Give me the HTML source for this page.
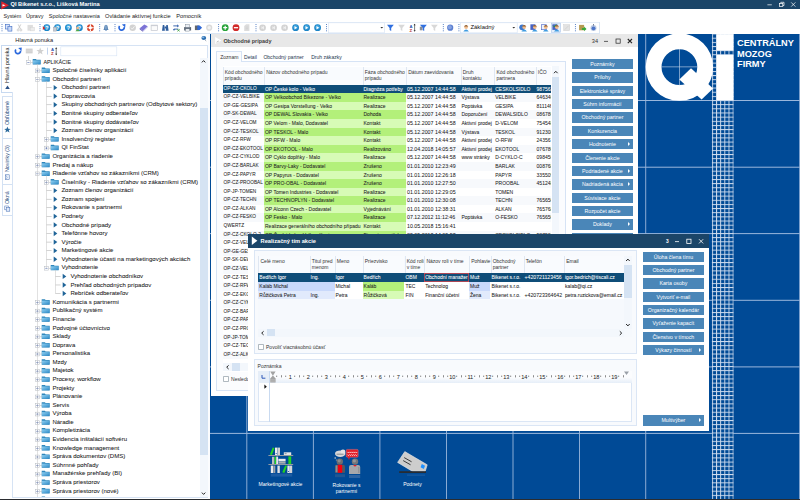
<!DOCTYPE html>
<html><head><meta charset="utf-8"><title>QI</title>
<style>
html,body{margin:0;padding:0}
body{width:800px;height:500px;overflow:hidden;position:relative;background:#fff;
 font-family:"Liberation Sans","DejaVu Sans",sans-serif;color:#222;font-size:5px}
.a{position:absolute;white-space:nowrap}
.t{position:absolute;white-space:nowrap;line-height:1;transform-origin:0 50%}
svg{position:absolute;overflow:visible}
.btn{position:absolute;background:#4a86b8;color:#fff;text-align:center;font-size:5.25px;height:10.3px;line-height:10.5px;width:60.6px;white-space:nowrap}
.btn i{position:absolute;right:2.8px;top:2.7px;width:0;height:0;border-left:2.7px solid #fff;border-top:2.2px solid transparent;border-bottom:2.2px solid transparent}
.row{-webkit-text-stroke:0.04px;position:absolute;height:8.6px;line-height:8.6px;font-size:5px;white-space:nowrap}
.c{position:absolute;top:0;height:100%;overflow:hidden;white-space:nowrap;padding-left:1px;box-sizing:border-box}
.hd{position:absolute;font-size:5px;line-height:6.1px;color:#333;white-space:normal;overflow:hidden;padding-left:1.2px;box-sizing:border-box;border-left:0.5px solid #dfe7f2}
.tr{-webkit-text-stroke:0.05px #1a1a1a;position:absolute;left:0;height:8.58px;line-height:8.6px;font-size:6.05px;white-space:nowrap;color:#1a1a1a}
</style></head><body>
<div class="a" style="left:210px;top:34.1px;width:590px;height:465.9px;background:#004a96"></div><svg width="800" height="500" style="left:0;top:0" viewBox="0 0 800 500"><defs><pattern id="gr" x="711.9" y="33.55" width="4.156" height="4.156" patternUnits="userSpaceOnUse"><rect width="4.156" height="4.156" fill="#cfdcee"/><rect x="0.95" y="0.95" width="3.2" height="3.2" fill="#004a96"/></pattern></defs><rect x="246.3" y="34.1" width="1" height="465.9" fill="#8aabd4"/><rect x="312.9" y="34.1" width="1" height="465.9" fill="#8aabd4"/><rect x="379.4" y="34.1" width="1" height="465.9" fill="#8aabd4"/><rect x="446.0" y="34.1" width="1" height="465.9" fill="#8aabd4"/><rect x="512.5" y="34.1" width="1" height="465.9" fill="#8aabd4"/><rect x="579.0" y="34.1" width="1" height="465.9" fill="#8aabd4"/><rect x="645.2" y="34.1" width="1" height="465.9" fill="#8aabd4"/><rect x="799.1" y="34.1" width="1" height="465.9" fill="#8aabd4"/><rect x="210" y="100.0" width="590" height="1" fill="#9ab7dc"/><rect x="210" y="166.7" width="590" height="1" fill="#9ab7dc"/><rect x="210" y="233.1" width="590" height="1" fill="#9ab7dc"/><rect x="210" y="299.8" width="590" height="1" fill="#9ab7dc"/><rect x="210" y="366.4" width="590" height="1" fill="#9ab7dc"/><rect x="210" y="432.9" width="590" height="1" fill="#9ab7dc"/><rect x="711.9" y="34.1" width="21.75" height="465.9" fill="url(#gr)"/><rect x="716.7" y="34.1" width="16.8" height="16.3" fill="#fff"/><rect x="716.7" y="54.9" width="16.8" height="45.2" fill="#fff"/><circle cx="679.4" cy="67.1" r="25.78" fill="none" stroke="#fff" stroke-width="15.85"/><rect x="679.2" y="49" width="0.6" height="36.4" fill="#c9d7ec"/><rect x="661.4" y="66.6" width="36" height="0.6" fill="#c9d7ec"/><polygon points="691,68.3 713.1,88.6 701.6,99.6 679.3,79.5" fill="#fff"/></svg><div class="a" style="left:737.4px;top:38.3px;font-size:9.7px;line-height:10.3px;font-weight:bold;color:#fff;transform:scaleX(0.953);transform-origin:0 0">CENTRÁLNY<br>MOZOG<br>FIRMY</div><div class="a" style="left:0;top:0;width:800px;height:9.2px;background:#1b4568"></div><svg width="9" height="9" style="left:1px;top:0.5px" viewBox="0 0 9 9"><polygon points="0.3,0.3 8,4.3 0.3,8.5" fill="#e0202a"/><polygon points="1.5,3.2 4.5,4.3 1.5,5.6" fill="#fff"/></svg><div class="a" style="left:10.5px;top:1.2px;font-size:5.7px;line-height:6.5px;font-weight:bold;color:#fff">QI Bikenet s.r.o., Lišková Martina</div><svg width="40" height="10" style="left:760px;top:0" viewBox="760 0 40 10"><g stroke="#fff" stroke-width="0.7" fill="none"><path d="M767.4 4.8h4.4"/><rect x="779.6" y="3.4" width="3.2" height="3.2"/><path d="M780.8 3.4v-1.1h3.2v3.2h-1.2"/><path d="M791.2 2.4l4.2 4.2M795.4 2.4l-4.2 4.2"/></g></svg><div class="a" style="left:3.4px;top:12.6px;font-size:5.35px;line-height:7px;color:#1a1a1a">Systém</div><div class="a" style="left:26px;top:12.6px;font-size:5.5px;line-height:7px;color:#1a1a1a">Úpravy</div><div class="a" style="left:48.8px;top:12.6px;font-size:5.5px;line-height:7px;color:#1a1a1a">Spoločné nastavenia</div><div class="a" style="left:105.1px;top:12.6px;font-size:5.62px;line-height:7px;color:#1a1a1a">Ovládanie aktívnej funkcie</div><div class="a" style="left:176.2px;top:12.6px;font-size:5.68px;line-height:7px;color:#1a1a1a">Pomocník</div><div class="a" style="left:0;top:33.1px;width:600px;height:0.8px;background:#dbe6f4"></div><div class="a" style="left:0;top:21.6px;width:600px;height:0.6px;background:#e6eef8"></div><div class="a" style="left:599.4px;top:21.6px;width:0.6px;height:12px;background:#dbe6f4"></div><svg width="800" height="40" style="left:0;top:0" viewBox="0 0 800 40"><rect x="328.6" y="22.8" width="56" height="10" fill="#fff" stroke="#d4e2f4" stroke-width="0.6"/><polygon points="380.4,27 383.2,27 381.8,28.6" fill="#333"/><rect x="460.6" y="22.8" width="56.6" height="10" fill="#fff" stroke="#d4e2f4" stroke-width="0.6"/><polygon points="512.4,27 515.2,27 513.8,28.6" fill="#333"/><rect x="1.55" y="24.0" width="0.9" height="1" fill="#4a78c0"/><rect x="1.55" y="26.1" width="0.9" height="1" fill="#4a78c0"/><rect x="1.55" y="28.2" width="0.9" height="1" fill="#4a78c0"/><rect x="1.55" y="30.3" width="0.9" height="1" fill="#4a78c0"/><rect x="5.3" y="24.4" width="4" height="4.6" fill="#dbe6fb" stroke="#3d6bc4" stroke-width="0.6"/><rect x="7.9" y="26.5" width="4" height="4.6" fill="#c9d9f7" stroke="#3d6bc4" stroke-width="0.6"/><path d="M18.2 24.4L20.5 28.9M20.8 24.4L18.5 28.9" stroke="#bbb" stroke-width="0.7" fill="none"/><circle cx="18.1" cy="30.0" r="1" fill="none" stroke="#bbb" stroke-width="0.6"/><circle cx="20.9" cy="30.0" r="1" fill="none" stroke="#bbb" stroke-width="0.6"/><rect x="27.5" y="24.9" width="5.4" height="5.8" fill="#dedede"/><rect x="30.2" y="27.3" width="4.3" height="3.6" fill="#ececec" stroke="#cfcfcf" stroke-width="0.4"/><rect x="39.55" y="24.0" width="0.9" height="1" fill="#4a78c0"/><rect x="39.55" y="26.1" width="0.9" height="1" fill="#4a78c0"/><rect x="39.55" y="28.2" width="0.9" height="1" fill="#4a78c0"/><rect x="39.55" y="30.3" width="0.9" height="1" fill="#4a78c0"/><circle cx="46.8" cy="27.7" r="3.4" fill="#1b86c9"/><circle cx="46.8" cy="27.099999999999998" r="2.3" fill="#46a8e0"/><text x="46.8" y="29.599999999999998" font-size="5.2" font-weight="bold" fill="#fff" text-anchor="middle" font-family="Liberation Sans,sans-serif">?</text><polygon points="42.8,25.9 45.199999999999996,28.3 42.8,30.099999999999998" fill="#d42a2a"/><circle cx="57.5" cy="27.7" r="3.4" fill="#1b86c9"/><circle cx="57.5" cy="27.099999999999998" r="2.3" fill="#46a8e0"/><text x="57.5" y="29.599999999999998" font-size="5.2" font-weight="bold" fill="#fff" text-anchor="middle" font-family="Liberation Sans,sans-serif">?</text><rect x="53.5" y="27.099999999999998" width="3.2" height="4" fill="#c7ccd4" stroke="#8a929e" stroke-width="0.4"/><circle cx="68.4" cy="27.7" r="3.4" fill="#1b86c9"/><circle cx="68.4" cy="27.099999999999998" r="2.3" fill="#46a8e0"/><text x="68.4" y="29.599999999999998" font-size="5.2" font-weight="bold" fill="#fff" text-anchor="middle" font-family="Liberation Sans,sans-serif">?</text><circle cx="79.4" cy="27.7" r="3.4" fill="#1b86c9"/><circle cx="79.4" cy="27.099999999999998" r="2.3" fill="#46a8e0"/><text x="79.4" y="29.599999999999998" font-size="5.2" font-weight="bold" fill="#fff" text-anchor="middle" font-family="Liberation Sans,sans-serif">?</text><circle cx="77.60000000000001" cy="27.9" r="1.5" fill="#f0b98a"/><path d="M75.4 31.3q2.2-3.4 4.4 0z" fill="#4fa84a"/><circle cx="90.4" cy="27.7" r="2.6" fill="none" stroke="#d8462c" stroke-width="1.9"/><g stroke="#fff" stroke-width="1.1"><path d="M87.0 27.7h1.8M92.0 27.7h1.8M90.4 24.3v1.8M90.4 29.3v1.8"/></g><rect x="99.25" y="24.0" width="0.9" height="1" fill="#4a78c0"/><rect x="99.25" y="26.1" width="0.9" height="1" fill="#4a78c0"/><rect x="99.25" y="28.2" width="0.9" height="1" fill="#4a78c0"/><rect x="99.25" y="30.3" width="0.9" height="1" fill="#4a78c0"/><path d="M103.4 29.9q0.8-0.8 0.8-2.6q0-2.6 1.8-2.6q1.8 0 1.8 2.6q0 1.8 0.8 2.6z" fill="#5b86b6"/><rect x="105.4" y="30.099999999999998" width="1.2" height="0.9" fill="#5b86b6"/><rect x="105.5" y="25.3" width="0.9" height="3.8" fill="#9dbbd9"/><rect x="114.55" y="24.0" width="0.9" height="1" fill="#4a78c0"/><rect x="114.55" y="26.1" width="0.9" height="1" fill="#4a78c0"/><rect x="114.55" y="28.2" width="0.9" height="1" fill="#4a78c0"/><rect x="114.55" y="30.3" width="0.9" height="1" fill="#4a78c0"/><path d="M119.60000000000001 26.0A2.6 2.6 0 1 0 124.2 27.099999999999998" fill="none" stroke="#2a68dc" stroke-width="1.7"/><polygon points="121.9,24.4 125.4,24.0 125.2,27.5" fill="#2a68dc"/><circle cx="132.7" cy="27.7" r="3.2" fill="#d2d2d2"/><path d="M131.1 27.7l1.2 1.4l2.2-2.8" stroke="#f4f4f4" stroke-width="0.9" fill="none"/><polygon points="139.7,28.3 144.29999999999998,24.5 147.7,26.3 142.89999999999998,30.7" fill="#7b73d6"/><polygon points="139.7,28.3 142.89999999999998,30.7 142.89999999999998,31.7 139.7,29.3" fill="#5b54b4"/><polygon points="142.89999999999998,30.7 147.7,26.3 147.7,27.3 142.89999999999998,31.7" fill="#aaa5e6"/><rect x="151.10000000000002" y="25.099999999999998" width="6.4" height="5.2" fill="#fbfbfb" stroke="#b9bdc6" stroke-width="0.6"/><rect x="151.10000000000002" y="25.099999999999998" width="6.4" height="1" fill="#c9ccd3"/><path d="M162.0 30.7l0.8-5.8h1.5l0.6 5.8zM168.60000000000002 30.7l-0.8-5.8h-1.5l-0.6 5.8z" fill="#2f5e9e"/><rect x="164.60000000000002" y="26.5" width="1.4" height="2" fill="#2f5e9e"/><path d="M173.3 25.9h4.4M173.9 29.099999999999998h4.4" stroke="#3d68b0" stroke-width="1"/><polygon points="177.10000000000002,24.3 179.10000000000002,25.9 177.10000000000002,27.5" fill="#3d68b0"/><polygon points="175.10000000000002,29.099999999999998 172.9,29.099999999999998 174.0,31.099999999999998" fill="#3d68b0"/><path d="M177.3 29.3l2.4 2M179.70000000000002 29.3l-2.4 2" stroke="#3a9a3a" stroke-width="0.8"/><rect x="184.1" y="27.099999999999998" width="7" height="3.4" fill="#5a6574"/><rect x="185.6" y="24.5" width="4" height="2.8" fill="#e9edf3" stroke="#6c7888" stroke-width="0.4"/><rect x="185.6" y="28.9" width="4" height="2.2" fill="#f5f7fa" stroke="#6c7888" stroke-width="0.4"/><rect x="194.9" y="25.5" width="4" height="4.6" fill="#60666e"/><path d="M197.3 25.5h2.4l2.4 2.3l-2.4 2.3h-2.4z" fill="#2f68d4"/><circle cx="209.2" cy="27.7" r="3.1" fill="#dadada"/><circle cx="209.2" cy="27.7" r="1.7" fill="#f2f2f2"/><rect x="218.15" y="24.0" width="0.9" height="1" fill="#4a78c0"/><rect x="218.15" y="26.1" width="0.9" height="1" fill="#4a78c0"/><rect x="218.15" y="28.2" width="0.9" height="1" fill="#4a78c0"/><rect x="218.15" y="30.3" width="0.9" height="1" fill="#4a78c0"/><circle cx="225.2" cy="27.7" r="3.4" fill="#27a33a"/><path d="M223.2 27.7h4M225.2 25.7v4" stroke="#fff" stroke-width="1.2"/><circle cx="236" cy="27.7" r="3.4" fill="#d12a2a"/><path d="M233.9 27.7h4.2" stroke="#fff" stroke-width="1.3"/><path d="M244.20000000000002 30.9v-4.8l2-1.8h3.2v6.6z" fill="#dcdcdc"/><path d="M245.8 27.099999999999998h2.4M245.8 28.7h2.4" stroke="#c6c6c6" stroke-width="0.5"/><rect x="255.55" y="24.0" width="0.9" height="1" fill="#4a78c0"/><rect x="255.55" y="26.1" width="0.9" height="1" fill="#4a78c0"/><rect x="255.55" y="28.2" width="0.9" height="1" fill="#4a78c0"/><rect x="255.55" y="30.3" width="0.9" height="1" fill="#4a78c0"/><circle cx="262.6" cy="27.7" r="3.3" fill="#d3d3d3"/><path d="M261.8 26.4v2.6M263.5 26.4l-1.3 1.3l1.3 1.3z" stroke="#f3f3f3" stroke-width="0.7" fill="#f3f3f3"/><circle cx="273.6" cy="27.7" r="3.3" fill="#d3d3d3"/><path d="M272.8 26.4v2.6M274.5 26.4l-1.3 1.3l1.3 1.3z" stroke="#f3f3f3" stroke-width="0.7" fill="#f3f3f3"/><circle cx="284.6" cy="27.7" r="3.3" fill="#d3d3d3"/><path d="M283.8 26.4v2.6M285.5 26.4l-1.3 1.3l1.3 1.3z" stroke="#f3f3f3" stroke-width="0.7" fill="#f3f3f3"/><circle cx="295.6" cy="27.7" r="3.4" fill="#1c84c6"/><circle cx="295.6" cy="27.2" r="2.4" fill="#3aa0dc"/><polygon points="294.5,26.0 297.20000000000005,27.7 294.5,29.4" fill="#fff"/><circle cx="306.6" cy="27.7" r="3.4" fill="#1c84c6"/><circle cx="306.6" cy="27.2" r="2.4" fill="#3aa0dc"/><polygon points="305.5,26.0 308.20000000000005,27.7 305.5,29.4" fill="#fff"/><circle cx="317.6" cy="27.7" r="3.4" fill="#1c84c6"/><circle cx="317.6" cy="27.2" r="2.4" fill="#3aa0dc"/><polygon points="316.5,26.0 319.20000000000005,27.7 316.5,29.4" fill="#fff"/><rect x="326.05" y="24.0" width="0.9" height="1" fill="#4a78c0"/><rect x="326.05" y="26.1" width="0.9" height="1" fill="#4a78c0"/><rect x="326.05" y="28.2" width="0.9" height="1" fill="#4a78c0"/><rect x="326.05" y="30.3" width="0.9" height="1" fill="#4a78c0"/><polygon points="387.0,24.7 393.79999999999995,24.7 391.2,27.9 391.2,30.9 389.59999999999997,29.9 389.59999999999997,27.9" fill="#2f6fe0"/><polygon points="398.1,24.7 404.9,24.7 402.3,27.9 402.3,30.9 400.7,29.9 400.7,27.9" fill="#d8d8d8"/><text x="409.40000000000003" y="27.5" font-size="4.2" font-weight="bold" fill="#2b4fa8" font-family="Liberation Sans,sans-serif">A</text><text x="409.40000000000003" y="31.5" font-size="4.2" font-weight="bold" fill="#b83030" font-family="Liberation Sans,sans-serif">Z</text><path d="M414.6 24.7v6.2" stroke="#222" stroke-width="0.6"/><polygon points="413.6,25.3 414.6,23.8 415.6,25.3" fill="#222"/><polygon points="413.6,30.3 414.6,31.799999999999997 415.6,30.3" fill="#222"/><polygon points="420.0,24.7 426.79999999999995,24.7 424.2,27.9 424.2,30.9 422.59999999999997,29.9 422.59999999999997,27.9" fill="#2f6fe0"/><rect x="419.79999999999995" y="26.7" width="2.6" height="3.6" fill="#8b9099"/><polygon points="431.0,24.7 437.79999999999995,24.7 435.2,27.9 435.2,30.9 433.59999999999997,29.9 433.59999999999997,27.9" fill="#d8d8d8"/><rect x="442.85" y="24.0" width="0.9" height="1" fill="#4a78c0"/><rect x="442.85" y="26.1" width="0.9" height="1" fill="#4a78c0"/><rect x="442.85" y="28.2" width="0.9" height="1" fill="#4a78c0"/><rect x="442.85" y="30.3" width="0.9" height="1" fill="#4a78c0"/><circle cx="450.2" cy="27.7" r="3.1" fill="#5b7fd0"/><circle cx="449.8" cy="27.2" r="2" fill="#86a3e2"/><rect x="458.45" y="24.0" width="0.9" height="1" fill="#4a78c0"/><rect x="458.45" y="26.1" width="0.9" height="1" fill="#4a78c0"/><rect x="458.45" y="28.2" width="0.9" height="1" fill="#4a78c0"/><rect x="458.45" y="30.3" width="0.9" height="1" fill="#4a78c0"/><circle cx="466.1" cy="27.099999999999998" r="1.9" fill="#f1bd8e"/><path d="M463.90000000000003 26.599999999999998q2.2-3 4.4 0z" fill="#8a5a2e"/><path d="M463.3 31.5q2.8-4 5.6 0z" fill="#3f9be0"/><circle cx="522.1999999999999" cy="27.3" r="2.9" fill="#3f78cc"/><circle cx="524.1999999999999" cy="27.099999999999998" r="1.9" fill="#f1bd8e"/><path d="M522.0 26.599999999999998q2.2-3 4.4 0z" fill="#8a5a2e"/><path d="M521.4 31.5q2.8-4 5.6 0z" fill="#3f9be0"/><rect x="530.4" y="24.3" width="5" height="5.6" fill="#4763c4"/><circle cx="534.8" cy="27.099999999999998" r="1.9" fill="#f1bd8e"/><path d="M532.6 26.599999999999998q2.2-3 4.4 0z" fill="#8a5a2e"/><path d="M532 31.5q2.8-4 5.6 0z" fill="#3f9be0"/><rect x="541.4" y="24.7" width="5" height="5" fill="#eef2fb" stroke="#4763c4" stroke-width="0.6"/><circle cx="545.8" cy="27.099999999999998" r="1.9" fill="#f1bd8e"/><path d="M543.6 26.599999999999998q2.2-3 4.4 0z" fill="#8a5a2e"/><path d="M543 31.5q2.8-4 5.6 0z" fill="#3f9be0"/><rect x="551.4" y="23.1" width="9.2" height="9.2" fill="#e4eefb" stroke="#9dbbe6" stroke-width="0.5"/><rect x="552.4" y="24.3" width="5" height="5.6" fill="#4763c4"/><circle cx="556.8" cy="27.099999999999998" r="1.9" fill="#f1bd8e"/><path d="M554.6 26.599999999999998q2.2-3 4.4 0z" fill="#8a5a2e"/><path d="M554 31.5q2.8-4 5.6 0z" fill="#3f9be0"/><path d="M553 25.7l1.2 1.2l2-2.4" stroke="#2fa12f" stroke-width="0.8" fill="none"/><rect x="563.7" y="24.7" width="6" height="6" fill="#e3e3e3" stroke="#cfcfcf" stroke-width="0.5"/><path d="M564.7 29.7l4-4" stroke="#c9c9c9" stroke-width="0.6"/><rect x="574.9499999999999" y="24.0" width="0.9" height="1" fill="#4a78c0"/><rect x="574.9499999999999" y="26.1" width="0.9" height="1" fill="#4a78c0"/><rect x="574.9499999999999" y="28.2" width="0.9" height="1" fill="#4a78c0"/><rect x="574.9499999999999" y="30.3" width="0.9" height="1" fill="#4a78c0"/><rect x="579.1" y="24.9" width="5" height="5.4" fill="#b59b52"/><polygon points="581.9,27.9 584.1,27.9 584.1,26.5 586.5,28.9 584.1,31.3 584.1,29.9 581.9,29.9" fill="#3aa83a"/><circle cx="593.5" cy="28.099999999999998" r="3" fill="#b9c7e2"/><circle cx="593.5" cy="28.3" r="1.9" fill="#4d76c9"/><rect x="593.0" y="24.099999999999998" width="1" height="1.4" fill="#68748a"/></svg><div class="a" style="left:470.5px;top:24.2px;font-size:5.9px;line-height:7px;color:#111">Základný</div><div class="a" style="left:0;top:34.2px;width:210.1px;height:465.8px;background:#fff"></div><div class="a" style="left:207.9px;top:34.2px;width:2.2px;height:465.8px;background:#fbfcfe"></div><div class="a" style="left:15.3px;top:36.6px;font-size:5.66px;line-height:7px;color:#222">Hlavná ponuka</div><svg width="8" height="8" style="left:200px;top:35px" viewBox="0 0 8 8"><ellipse cx="3.8" cy="3" rx="2.4" ry="2" fill="#2a6db0"/><ellipse cx="3.2" cy="2.4" rx="1.2" ry="0.8" fill="#7fb4e4"/><path d="M4.6 4.4l1.6 1.8" stroke="#8a96a6" stroke-width="0.7"/></svg><div class="a" style="left:0.6px;top:45px;width:12px;height:47.5px;border:0.6px solid #c7d9f0;border-right:none;box-sizing:border-box;background:#fff"></div><div class="a" style="left:12.4px;top:44.8px;width:195.4px;height:453px;border:0.6px solid #d6e3f4;box-sizing:border-box;background:#fff"></div><div class="a" style="left:12.2px;top:45.6px;width:1px;height:46.4px;background:#fff"></div><div class="a" style="left:1.6px;top:96px;width:10.8px;height:120px;border:0.5px solid #d3e1f3;border-right:none;box-sizing:border-box"></div><div class="a" style="left:1.6px;top:138.4px;width:10.8px;height:0.5px;background:#d3e1f3"></div><div class="a" style="left:1.6px;top:184.4px;width:10.8px;height:0.5px;background:#d3e1f3"></div><div class="a" style="left:7.4px;top:82.6px;width:0;height:0"><div style="position:absolute;left:0;top:0;transform:rotate(-90deg);transform-origin:0 0;white-space:nowrap;font-size:5.3px;line-height:6px;margin-top:0;color:#222"><span style="position:relative;top:-3px">Hlavná ponuka</span></div></div><div class="a" style="left:7.4px;top:125.4px;width:0;height:0"><div style="position:absolute;left:0;top:0;transform:rotate(-90deg);transform-origin:0 0;white-space:nowrap;font-size:5.45px;line-height:6px;margin-top:0;color:#2a4d80"><span style="position:relative;top:-3px">Obľúbené</span></div></div><div class="a" style="left:7.4px;top:171.7px;width:0;height:0"><div style="position:absolute;left:0;top:0;transform:rotate(-90deg);transform-origin:0 0;white-space:nowrap;font-size:5.3px;line-height:6px;margin-top:0;color:#2a4d80"><span style="position:relative;top:-3px">Novinky (3)</span></div></div><div class="a" style="left:7.4px;top:203.5px;width:0;height:0"><div style="position:absolute;left:0;top:0;transform:rotate(-90deg);transform-origin:0 0;white-space:nowrap;font-size:5.3px;line-height:6px;margin-top:0;color:#2a4d80"><span style="position:relative;top:-3px">Okná</span></div></div><svg width="13" height="240" style="left:0;top:0" viewBox="0 0 13 240"><polygon points="5.2,89 9.8,89 7.5,85.6" fill="#2a4f86"/><polygon points="7.4,126.6 8.3,128.8 10.6,128.9 8.8,130.3 9.5,132.6 7.4,131.3 5.3,132.6 6,130.3 4.2,128.9 6.5,128.8" fill="#2b6a9c"/><rect x="5.4" y="174.8" width="3.8" height="4.6" fill="#eef3fb" stroke="#3d68b0" stroke-width="0.5"/><path d="M5.4 175l1.9 2.3l-1.9 2.3" stroke="#3d68b0" stroke-width="0.4" fill="none"/><rect x="4.8" y="206" width="3.6" height="3.8" fill="#fff" stroke="#3d68b0" stroke-width="0.5"/><rect x="6.2" y="207.4" width="3.6" height="3.8" fill="#dfe9fb" stroke="#3d68b0" stroke-width="0.5"/></svg><svg width="120" height="14" style="left:0;top:44px" viewBox="0 44 120 14"><path d="M15.9 49.5A2.6 2.6 0 1 0 20.5 50.6" fill="none" stroke="#2a68dc" stroke-width="1.7"/><polygon points="18.2,47.900000000000006 21.7,47.5 21.5,51.0" fill="#2a68dc"/><rect x="25.8" y="48.6" width="6.8" height="4.8" fill="#cfcfcf"/><path d="M25.8 50.2h6.8M25.8 51.8h6.8" stroke="#e9e9e9" stroke-width="0.4"/><polygon points="40.2,47.4 41.2,50 44,50.1 41.8,51.8 42.6,54.5 40.2,52.9 37.8,54.5 38.6,51.8 36.4,50.1 39.2,50" fill="#d0d0d0"/><rect x="47.2" y="47.6" width="0.7" height="7" fill="#a9c2e6"/><text x="51.0" y="51.0" font-size="4.2" font-weight="bold" fill="#2b4fa8" font-family="Liberation Sans,sans-serif">A</text><text x="51.0" y="55.0" font-size="4.2" font-weight="bold" fill="#b83030" font-family="Liberation Sans,sans-serif">Z</text><path d="M56.2 48.2v6.2" stroke="#222" stroke-width="0.6"/><polygon points="55.2,48.800000000000004 56.2,47.300000000000004 57.2,48.800000000000004" fill="#222"/><polygon points="55.2,53.800000000000004 56.2,55.300000000000004 57.2,53.800000000000004" fill="#222"/><rect x="60.8" y="46.8" width="56" height="9" fill="#fff" stroke="#d6e3f5" stroke-width="0.6"/></svg><div class="a" style="left:13px;top:45.4px;width:187px;height:452px;overflow:hidden"><div style="position:absolute;left:-13px;top:-45.4px;width:210px;height:520px"><div class="tr" style="left:43.4px;top:57.55px;font-size:5.35px">APLIKÁCIE</div><div class="tr" style="left:52.4px;top:66.13px">Spoločné číselníky aplikácií</div><div class="tr" style="left:52.4px;top:74.71px">Obchodní partneri</div><div class="tr" style="left:61.4px;top:83.29px">Obchodní partneri</div><div class="tr" style="left:61.4px;top:91.87px">Dopravcovia</div><div class="tr" style="left:61.4px;top:100.45px">Skupiny obchodných partnerov (Odbytové sektory)</div><div class="tr" style="left:61.4px;top:109.03px">Bonitné skupiny odberateľov</div><div class="tr" style="left:61.4px;top:117.61px">Bonitné skupiny dodávateľov</div><div class="tr" style="left:61.4px;top:126.19px">Zoznam členov organizácií</div><div class="tr" style="left:61.4px;top:134.77px">Insolvenčný register</div><div class="tr" style="left:61.4px;top:143.35px">QI FinStat</div><div class="tr" style="left:52.4px;top:151.93px">Organizácia a riadenie</div><div class="tr" style="left:52.4px;top:160.51px">Predaj a nákup</div><div class="tr" style="left:52.4px;top:169.09px">Riadenie vzťahov so zákazníkmi (CRM)</div><div class="tr" style="left:61.4px;top:177.67px">Číselníky - Riadenie vzťahov so zákazníkmi (CRM)</div><div class="tr" style="left:61.4px;top:186.25px">Zoznam členov organizácií</div><div class="tr" style="left:61.4px;top:194.83px">Zoznam spojení</div><div class="tr" style="left:61.4px;top:203.41px">Rokovanie s partnermi</div><div class="tr" style="left:61.4px;top:211.99px">Podnety</div><div class="tr" style="left:61.4px;top:220.57px">Obchodné prípady</div><div class="tr" style="left:61.4px;top:229.15px">Telefónne hovory</div><div class="tr" style="left:61.4px;top:237.73px">Výročie</div><div class="tr" style="left:61.4px;top:246.31px">Marketingové akcie</div><div class="tr" style="left:61.4px;top:254.89px">Vyhodnotenie účasti na marketingových akciách</div><div class="tr" style="left:61.4px;top:263.47px">Vyhodnotenie</div><div class="tr" style="left:70.4px;top:272.05px">Vyhodnotenie obchodníkov</div><div class="tr" style="left:70.4px;top:280.63px">Prehľad obchodných prípadov</div><div class="tr" style="left:70.4px;top:289.21px">Rebríček odberateľov</div><div class="tr" style="left:52.4px;top:297.79px">Komunikácia s partnermi</div><div class="tr" style="left:52.4px;top:306.37px">Publikačný systém</div><div class="tr" style="left:52.4px;top:314.95px">Financie</div><div class="tr" style="left:52.4px;top:323.53px">Podvojné účtovníctvo</div><div class="tr" style="left:52.4px;top:332.11px">Sklady</div><div class="tr" style="left:52.4px;top:340.69px">Doprava</div><div class="tr" style="left:52.4px;top:349.27px">Personalistika</div><div class="tr" style="left:52.4px;top:357.85px">Mzdy</div><div class="tr" style="left:52.4px;top:366.43px">Majetok</div><div class="tr" style="left:52.4px;top:375.01px">Procesy, workflow</div><div class="tr" style="left:52.4px;top:383.59px">Projekty</div><div class="tr" style="left:52.4px;top:392.17px">Plánovanie</div><div class="tr" style="left:52.4px;top:400.75px">Servis</div><div class="tr" style="left:52.4px;top:409.33px">Výroba</div><div class="tr" style="left:52.4px;top:417.91px">Náradie</div><div class="tr" style="left:52.4px;top:426.49px">Kompletizácia</div><div class="tr" style="left:52.4px;top:435.07px">Evidencia inštalácií softvéru</div><div class="tr" style="left:52.4px;top:443.65px">Knowledge management</div><div class="tr" style="left:52.4px;top:452.23px">Správa dokumentov (DMS)</div><div class="tr" style="left:52.4px;top:460.81px">Súhrnné pohľady</div><div class="tr" style="left:52.4px;top:469.39px">Manažérske prehľady (BI)</div><div class="tr" style="left:52.4px;top:477.97px">Správa priestorov</div><div class="tr" style="left:52.4px;top:486.55px">Správa priestorov (nové)</div><div class="tr" style="left:52.4px;top:495.13px">Nezaradené</div><svg width="210" height="520" style="left:0;top:0" viewBox="0 0 210 520"><defs><linearGradient id="fg" x1="0" y1="0" x2="1" y2="1"><stop offset="0" stop-color="#8fd0f2"/><stop offset="1" stop-color="#2f8ac6"/></linearGradient></defs><rect x="30.4" y="62.05" width="2.4" height="0.5" fill="#b5b5b5"/><rect x="26.5" y="60.4" width="3.8" height="3.8" fill="#fff" stroke="#b3b9c1" stroke-width="0.5"/><rect x="27.299999999999997" y="62.0" width="2.2" height="0.6" fill="#4c66a8"/><path d="M32.7 59.0h3.2l0.7 0.8h4.1v4.6h-8z" fill="#2f86bb"/><rect x="33.0" y="60.4" width="7.4" height="3.7" fill="url(#fg)"/><rect x="39.4" y="70.63000000000001" width="2.4" height="0.5" fill="#b5b5b5"/><rect x="35.5" y="68.98" width="3.8" height="3.8" fill="#fff" stroke="#b3b9c1" stroke-width="0.5"/><rect x="36.3" y="70.58000000000001" width="2.2" height="0.6" fill="#4c66a8"/><rect x="37.1" y="69.78000000000002" width="0.6" height="2.2" fill="#4c66a8"/><path d="M41.7 67.58h3.2l0.7 0.8h4.1v4.6h-8z" fill="#2f86bb"/><rect x="42.0" y="68.98" width="7.4" height="3.7" fill="url(#fg)"/><rect x="39.4" y="79.21000000000001" width="2.4" height="0.5" fill="#b5b5b5"/><rect x="35.5" y="77.56" width="3.8" height="3.8" fill="#fff" stroke="#b3b9c1" stroke-width="0.5"/><rect x="36.3" y="79.16000000000001" width="2.2" height="0.6" fill="#4c66a8"/><path d="M41.7 76.16h3.2l0.7 0.8h4.1v4.6h-8z" fill="#2f86bb"/><rect x="42.0" y="77.56" width="7.4" height="3.7" fill="url(#fg)"/><polygon points="53.699999999999996,84.94 57.3,87.64 53.699999999999996,90.34" fill="#1f6498"/><rect x="46.4" y="87.39" width="5.2" height="0.5" fill="#a8a8a8"/><polygon points="53.699999999999996,93.52 57.3,96.22 53.699999999999996,98.92" fill="#1f6498"/><rect x="46.4" y="95.97" width="5.2" height="0.5" fill="#a8a8a8"/><polygon points="53.699999999999996,102.1 57.3,104.8 53.699999999999996,107.5" fill="#1f6498"/><rect x="46.4" y="104.55" width="5.2" height="0.5" fill="#a8a8a8"/><polygon points="53.699999999999996,110.67999999999999 57.3,113.38 53.699999999999996,116.08" fill="#1f6498"/><rect x="46.4" y="113.13" width="5.2" height="0.5" fill="#a8a8a8"/><polygon points="53.699999999999996,119.26 57.3,121.96000000000001 53.699999999999996,124.66000000000001" fill="#1f6498"/><rect x="46.4" y="121.71000000000001" width="5.2" height="0.5" fill="#a8a8a8"/><polygon points="53.699999999999996,127.83999999999999 57.3,130.54 53.699999999999996,133.23999999999998" fill="#1f6498"/><rect x="46.4" y="130.29" width="5.2" height="0.5" fill="#a8a8a8"/><rect x="48.4" y="139.27" width="2.4" height="0.5" fill="#b5b5b5"/><rect x="44.5" y="137.62" width="3.8" height="3.8" fill="#fff" stroke="#b3b9c1" stroke-width="0.5"/><rect x="45.3" y="139.22" width="2.2" height="0.6" fill="#4c66a8"/><rect x="46.1" y="138.42000000000002" width="0.6" height="2.2" fill="#4c66a8"/><path d="M50.7 136.22h3.2l0.7 0.8h4.1v4.6h-8z" fill="#2f86bb"/><rect x="51.0" y="137.62" width="7.4" height="3.7" fill="url(#fg)"/><rect x="48.4" y="147.85" width="2.4" height="0.5" fill="#b5b5b5"/><rect x="44.5" y="146.2" width="3.8" height="3.8" fill="#fff" stroke="#b3b9c1" stroke-width="0.5"/><rect x="45.3" y="147.79999999999998" width="2.2" height="0.6" fill="#4c66a8"/><rect x="46.1" y="147.0" width="0.6" height="2.2" fill="#4c66a8"/><path d="M50.7 144.79999999999998h3.2l0.7 0.8h4.1v4.6h-8z" fill="#2f86bb"/><rect x="51.0" y="146.2" width="7.4" height="3.7" fill="url(#fg)"/><rect x="39.4" y="156.43" width="2.4" height="0.5" fill="#b5b5b5"/><rect x="35.5" y="154.78" width="3.8" height="3.8" fill="#fff" stroke="#b3b9c1" stroke-width="0.5"/><rect x="36.3" y="156.38" width="2.2" height="0.6" fill="#4c66a8"/><rect x="37.1" y="155.58" width="0.6" height="2.2" fill="#4c66a8"/><path d="M41.7 153.38h3.2l0.7 0.8h4.1v4.6h-8z" fill="#2f86bb"/><rect x="42.0" y="154.78" width="7.4" height="3.7" fill="url(#fg)"/><rect x="39.4" y="165.01000000000002" width="2.4" height="0.5" fill="#b5b5b5"/><rect x="35.5" y="163.36" width="3.8" height="3.8" fill="#fff" stroke="#b3b9c1" stroke-width="0.5"/><rect x="36.3" y="164.96" width="2.2" height="0.6" fill="#4c66a8"/><rect x="37.1" y="164.16000000000003" width="0.6" height="2.2" fill="#4c66a8"/><path d="M41.7 161.96h3.2l0.7 0.8h4.1v4.6h-8z" fill="#2f86bb"/><rect x="42.0" y="163.36" width="7.4" height="3.7" fill="url(#fg)"/><rect x="39.4" y="173.59" width="2.4" height="0.5" fill="#b5b5b5"/><rect x="35.5" y="171.94" width="3.8" height="3.8" fill="#fff" stroke="#b3b9c1" stroke-width="0.5"/><rect x="36.3" y="173.54" width="2.2" height="0.6" fill="#4c66a8"/><path d="M41.7 170.54h3.2l0.7 0.8h4.1v4.6h-8z" fill="#2f86bb"/><rect x="42.0" y="171.94" width="7.4" height="3.7" fill="url(#fg)"/><rect x="48.4" y="182.17000000000002" width="2.4" height="0.5" fill="#b5b5b5"/><rect x="44.5" y="180.52" width="3.8" height="3.8" fill="#fff" stroke="#b3b9c1" stroke-width="0.5"/><rect x="45.3" y="182.12" width="2.2" height="0.6" fill="#4c66a8"/><rect x="46.1" y="181.32000000000002" width="0.6" height="2.2" fill="#4c66a8"/><path d="M50.7 179.12h3.2l0.7 0.8h4.1v4.6h-8z" fill="#2f86bb"/><rect x="51.0" y="180.52" width="7.4" height="3.7" fill="url(#fg)"/><polygon points="53.699999999999996,187.9 57.3,190.6 53.699999999999996,193.29999999999998" fill="#1f6498"/><rect x="46.4" y="190.35" width="5.2" height="0.5" fill="#a8a8a8"/><polygon points="53.699999999999996,196.48000000000002 57.3,199.18 53.699999999999996,201.88" fill="#1f6498"/><rect x="46.4" y="198.93" width="5.2" height="0.5" fill="#a8a8a8"/><polygon points="53.699999999999996,205.06000000000003 57.3,207.76000000000002 53.699999999999996,210.46" fill="#1f6498"/><rect x="46.4" y="207.51000000000002" width="5.2" height="0.5" fill="#a8a8a8"/><polygon points="53.699999999999996,213.64000000000001 57.3,216.34 53.699999999999996,219.04" fill="#1f6498"/><rect x="46.4" y="216.09" width="5.2" height="0.5" fill="#a8a8a8"/><polygon points="53.699999999999996,222.22000000000003 57.3,224.92000000000002 53.699999999999996,227.62" fill="#1f6498"/><rect x="46.4" y="224.67000000000002" width="5.2" height="0.5" fill="#a8a8a8"/><polygon points="53.699999999999996,230.8 57.3,233.5 53.699999999999996,236.2" fill="#1f6498"/><rect x="46.4" y="233.25" width="5.2" height="0.5" fill="#a8a8a8"/><polygon points="53.699999999999996,239.38000000000002 57.3,242.08 53.699999999999996,244.78" fill="#1f6498"/><rect x="46.4" y="241.83" width="5.2" height="0.5" fill="#a8a8a8"/><polygon points="53.699999999999996,247.96 57.3,250.66 53.699999999999996,253.35999999999999" fill="#1f6498"/><rect x="46.4" y="250.41" width="5.2" height="0.5" fill="#a8a8a8"/><polygon points="53.699999999999996,256.54 57.3,259.24 53.699999999999996,261.94" fill="#1f6498"/><rect x="46.4" y="258.99" width="5.2" height="0.5" fill="#a8a8a8"/><rect x="48.4" y="267.96999999999997" width="2.4" height="0.5" fill="#b5b5b5"/><rect x="44.5" y="266.32" width="3.8" height="3.8" fill="#fff" stroke="#b3b9c1" stroke-width="0.5"/><rect x="45.3" y="267.91999999999996" width="2.2" height="0.6" fill="#4c66a8"/><path d="M50.7 264.92h3.2l0.7 0.8h4.1v4.6h-8z" fill="#2f86bb"/><rect x="51.0" y="266.32" width="7.4" height="3.7" fill="url(#fg)"/><polygon points="62.7,273.7 66.30000000000001,276.4 62.7,279.09999999999997" fill="#1f6498"/><rect x="55.400000000000006" y="276.15" width="5.2" height="0.5" fill="#a8a8a8"/><polygon points="62.7,282.28000000000003 66.30000000000001,284.98 62.7,287.68" fill="#1f6498"/><rect x="55.400000000000006" y="284.73" width="5.2" height="0.5" fill="#a8a8a8"/><polygon points="62.7,290.86 66.30000000000001,293.56 62.7,296.26" fill="#1f6498"/><rect x="55.400000000000006" y="293.31" width="5.2" height="0.5" fill="#a8a8a8"/><rect x="39.4" y="302.28999999999996" width="2.4" height="0.5" fill="#b5b5b5"/><rect x="35.5" y="300.64" width="3.8" height="3.8" fill="#fff" stroke="#b3b9c1" stroke-width="0.5"/><rect x="36.3" y="302.23999999999995" width="2.2" height="0.6" fill="#4c66a8"/><rect x="37.1" y="301.43999999999994" width="0.6" height="2.2" fill="#4c66a8"/><path d="M41.7 299.24h3.2l0.7 0.8h4.1v4.6h-8z" fill="#2f86bb"/><rect x="42.0" y="300.64" width="7.4" height="3.7" fill="url(#fg)"/><rect x="39.4" y="310.86999999999995" width="2.4" height="0.5" fill="#b5b5b5"/><rect x="35.5" y="309.21999999999997" width="3.8" height="3.8" fill="#fff" stroke="#b3b9c1" stroke-width="0.5"/><rect x="36.3" y="310.81999999999994" width="2.2" height="0.6" fill="#4c66a8"/><rect x="37.1" y="310.0199999999999" width="0.6" height="2.2" fill="#4c66a8"/><path d="M41.7 307.82h3.2l0.7 0.8h4.1v4.6h-8z" fill="#2f86bb"/><rect x="42.0" y="309.21999999999997" width="7.4" height="3.7" fill="url(#fg)"/><rect x="39.4" y="319.44999999999993" width="2.4" height="0.5" fill="#b5b5b5"/><rect x="35.5" y="317.79999999999995" width="3.8" height="3.8" fill="#fff" stroke="#b3b9c1" stroke-width="0.5"/><rect x="36.3" y="319.3999999999999" width="2.2" height="0.6" fill="#4c66a8"/><rect x="37.1" y="318.5999999999999" width="0.6" height="2.2" fill="#4c66a8"/><path d="M41.7 316.4h3.2l0.7 0.8h4.1v4.6h-8z" fill="#2f86bb"/><rect x="42.0" y="317.79999999999995" width="7.4" height="3.7" fill="url(#fg)"/><rect x="39.4" y="328.03" width="2.4" height="0.5" fill="#b5b5b5"/><rect x="35.5" y="326.38" width="3.8" height="3.8" fill="#fff" stroke="#b3b9c1" stroke-width="0.5"/><rect x="36.3" y="327.97999999999996" width="2.2" height="0.6" fill="#4c66a8"/><rect x="37.1" y="327.17999999999995" width="0.6" height="2.2" fill="#4c66a8"/><path d="M41.7 324.98h3.2l0.7 0.8h4.1v4.6h-8z" fill="#2f86bb"/><rect x="42.0" y="326.38" width="7.4" height="3.7" fill="url(#fg)"/><rect x="39.4" y="336.60999999999996" width="2.4" height="0.5" fill="#b5b5b5"/><rect x="35.5" y="334.96" width="3.8" height="3.8" fill="#fff" stroke="#b3b9c1" stroke-width="0.5"/><rect x="36.3" y="336.55999999999995" width="2.2" height="0.6" fill="#4c66a8"/><rect x="37.1" y="335.75999999999993" width="0.6" height="2.2" fill="#4c66a8"/><path d="M41.7 333.56h3.2l0.7 0.8h4.1v4.6h-8z" fill="#2f86bb"/><rect x="42.0" y="334.96" width="7.4" height="3.7" fill="url(#fg)"/><rect x="39.4" y="345.18999999999994" width="2.4" height="0.5" fill="#b5b5b5"/><rect x="35.5" y="343.53999999999996" width="3.8" height="3.8" fill="#fff" stroke="#b3b9c1" stroke-width="0.5"/><rect x="36.3" y="345.13999999999993" width="2.2" height="0.6" fill="#4c66a8"/><rect x="37.1" y="344.3399999999999" width="0.6" height="2.2" fill="#4c66a8"/><path d="M41.7 342.14h3.2l0.7 0.8h4.1v4.6h-8z" fill="#2f86bb"/><rect x="42.0" y="343.53999999999996" width="7.4" height="3.7" fill="url(#fg)"/><rect x="39.4" y="353.77" width="2.4" height="0.5" fill="#b5b5b5"/><rect x="35.5" y="352.12" width="3.8" height="3.8" fill="#fff" stroke="#b3b9c1" stroke-width="0.5"/><rect x="36.3" y="353.71999999999997" width="2.2" height="0.6" fill="#4c66a8"/><rect x="37.1" y="352.91999999999996" width="0.6" height="2.2" fill="#4c66a8"/><path d="M41.7 350.72h3.2l0.7 0.8h4.1v4.6h-8z" fill="#2f86bb"/><rect x="42.0" y="352.12" width="7.4" height="3.7" fill="url(#fg)"/><rect x="39.4" y="362.34999999999997" width="2.4" height="0.5" fill="#b5b5b5"/><rect x="35.5" y="360.7" width="3.8" height="3.8" fill="#fff" stroke="#b3b9c1" stroke-width="0.5"/><rect x="36.3" y="362.29999999999995" width="2.2" height="0.6" fill="#4c66a8"/><rect x="37.1" y="361.49999999999994" width="0.6" height="2.2" fill="#4c66a8"/><path d="M41.7 359.3h3.2l0.7 0.8h4.1v4.6h-8z" fill="#2f86bb"/><rect x="42.0" y="360.7" width="7.4" height="3.7" fill="url(#fg)"/><rect x="39.4" y="370.92999999999995" width="2.4" height="0.5" fill="#b5b5b5"/><rect x="35.5" y="369.28" width="3.8" height="3.8" fill="#fff" stroke="#b3b9c1" stroke-width="0.5"/><rect x="36.3" y="370.87999999999994" width="2.2" height="0.6" fill="#4c66a8"/><rect x="37.1" y="370.0799999999999" width="0.6" height="2.2" fill="#4c66a8"/><path d="M41.7 367.88h3.2l0.7 0.8h4.1v4.6h-8z" fill="#2f86bb"/><rect x="42.0" y="369.28" width="7.4" height="3.7" fill="url(#fg)"/><rect x="39.4" y="379.50999999999993" width="2.4" height="0.5" fill="#b5b5b5"/><rect x="35.5" y="377.85999999999996" width="3.8" height="3.8" fill="#fff" stroke="#b3b9c1" stroke-width="0.5"/><rect x="36.3" y="379.4599999999999" width="2.2" height="0.6" fill="#4c66a8"/><rect x="37.1" y="378.6599999999999" width="0.6" height="2.2" fill="#4c66a8"/><path d="M41.7 376.46h3.2l0.7 0.8h4.1v4.6h-8z" fill="#2f86bb"/><rect x="42.0" y="377.85999999999996" width="7.4" height="3.7" fill="url(#fg)"/><rect x="39.4" y="388.09" width="2.4" height="0.5" fill="#b5b5b5"/><rect x="35.5" y="386.44" width="3.8" height="3.8" fill="#fff" stroke="#b3b9c1" stroke-width="0.5"/><rect x="36.3" y="388.03999999999996" width="2.2" height="0.6" fill="#4c66a8"/><rect x="37.1" y="387.23999999999995" width="0.6" height="2.2" fill="#4c66a8"/><path d="M41.7 385.04h3.2l0.7 0.8h4.1v4.6h-8z" fill="#2f86bb"/><rect x="42.0" y="386.44" width="7.4" height="3.7" fill="url(#fg)"/><rect x="39.4" y="396.66999999999996" width="2.4" height="0.5" fill="#b5b5b5"/><rect x="35.5" y="395.02" width="3.8" height="3.8" fill="#fff" stroke="#b3b9c1" stroke-width="0.5"/><rect x="36.3" y="396.61999999999995" width="2.2" height="0.6" fill="#4c66a8"/><rect x="37.1" y="395.81999999999994" width="0.6" height="2.2" fill="#4c66a8"/><path d="M41.7 393.62h3.2l0.7 0.8h4.1v4.6h-8z" fill="#2f86bb"/><rect x="42.0" y="395.02" width="7.4" height="3.7" fill="url(#fg)"/><rect x="39.4" y="405.24999999999994" width="2.4" height="0.5" fill="#b5b5b5"/><rect x="35.5" y="403.59999999999997" width="3.8" height="3.8" fill="#fff" stroke="#b3b9c1" stroke-width="0.5"/><rect x="36.3" y="405.19999999999993" width="2.2" height="0.6" fill="#4c66a8"/><rect x="37.1" y="404.3999999999999" width="0.6" height="2.2" fill="#4c66a8"/><path d="M41.7 402.2h3.2l0.7 0.8h4.1v4.6h-8z" fill="#2f86bb"/><rect x="42.0" y="403.59999999999997" width="7.4" height="3.7" fill="url(#fg)"/><rect x="39.4" y="413.83" width="2.4" height="0.5" fill="#b5b5b5"/><rect x="35.5" y="412.18" width="3.8" height="3.8" fill="#fff" stroke="#b3b9c1" stroke-width="0.5"/><rect x="36.3" y="413.78" width="2.2" height="0.6" fill="#4c66a8"/><rect x="37.1" y="412.97999999999996" width="0.6" height="2.2" fill="#4c66a8"/><path d="M41.7 410.78000000000003h3.2l0.7 0.8h4.1v4.6h-8z" fill="#2f86bb"/><rect x="42.0" y="412.18" width="7.4" height="3.7" fill="url(#fg)"/><rect x="39.4" y="422.40999999999997" width="2.4" height="0.5" fill="#b5b5b5"/><rect x="35.5" y="420.76" width="3.8" height="3.8" fill="#fff" stroke="#b3b9c1" stroke-width="0.5"/><rect x="36.3" y="422.35999999999996" width="2.2" height="0.6" fill="#4c66a8"/><rect x="37.1" y="421.55999999999995" width="0.6" height="2.2" fill="#4c66a8"/><path d="M41.7 419.36h3.2l0.7 0.8h4.1v4.6h-8z" fill="#2f86bb"/><rect x="42.0" y="420.76" width="7.4" height="3.7" fill="url(#fg)"/><rect x="39.4" y="430.98999999999995" width="2.4" height="0.5" fill="#b5b5b5"/><rect x="35.5" y="429.34" width="3.8" height="3.8" fill="#fff" stroke="#b3b9c1" stroke-width="0.5"/><rect x="36.3" y="430.93999999999994" width="2.2" height="0.6" fill="#4c66a8"/><rect x="37.1" y="430.13999999999993" width="0.6" height="2.2" fill="#4c66a8"/><path d="M41.7 427.94h3.2l0.7 0.8h4.1v4.6h-8z" fill="#2f86bb"/><rect x="42.0" y="429.34" width="7.4" height="3.7" fill="url(#fg)"/><rect x="39.4" y="439.56999999999994" width="2.4" height="0.5" fill="#b5b5b5"/><rect x="35.5" y="437.91999999999996" width="3.8" height="3.8" fill="#fff" stroke="#b3b9c1" stroke-width="0.5"/><rect x="36.3" y="439.5199999999999" width="2.2" height="0.6" fill="#4c66a8"/><rect x="37.1" y="438.7199999999999" width="0.6" height="2.2" fill="#4c66a8"/><path d="M41.7 436.52h3.2l0.7 0.8h4.1v4.6h-8z" fill="#2f86bb"/><rect x="42.0" y="437.91999999999996" width="7.4" height="3.7" fill="url(#fg)"/><rect x="39.4" y="448.15" width="2.4" height="0.5" fill="#b5b5b5"/><rect x="35.5" y="446.5" width="3.8" height="3.8" fill="#fff" stroke="#b3b9c1" stroke-width="0.5"/><rect x="36.3" y="448.09999999999997" width="2.2" height="0.6" fill="#4c66a8"/><rect x="37.1" y="447.29999999999995" width="0.6" height="2.2" fill="#4c66a8"/><path d="M41.7 445.1h3.2l0.7 0.8h4.1v4.6h-8z" fill="#2f86bb"/><rect x="42.0" y="446.5" width="7.4" height="3.7" fill="url(#fg)"/><rect x="39.4" y="456.72999999999996" width="2.4" height="0.5" fill="#b5b5b5"/><rect x="35.5" y="455.08" width="3.8" height="3.8" fill="#fff" stroke="#b3b9c1" stroke-width="0.5"/><rect x="36.3" y="456.67999999999995" width="2.2" height="0.6" fill="#4c66a8"/><rect x="37.1" y="455.87999999999994" width="0.6" height="2.2" fill="#4c66a8"/><path d="M41.7 453.68h3.2l0.7 0.8h4.1v4.6h-8z" fill="#2f86bb"/><rect x="42.0" y="455.08" width="7.4" height="3.7" fill="url(#fg)"/><rect x="39.4" y="465.30999999999995" width="2.4" height="0.5" fill="#b5b5b5"/><rect x="35.5" y="463.65999999999997" width="3.8" height="3.8" fill="#fff" stroke="#b3b9c1" stroke-width="0.5"/><rect x="36.3" y="465.25999999999993" width="2.2" height="0.6" fill="#4c66a8"/><rect x="37.1" y="464.4599999999999" width="0.6" height="2.2" fill="#4c66a8"/><path d="M41.7 462.26h3.2l0.7 0.8h4.1v4.6h-8z" fill="#2f86bb"/><rect x="42.0" y="463.65999999999997" width="7.4" height="3.7" fill="url(#fg)"/><rect x="39.4" y="473.89" width="2.4" height="0.5" fill="#b5b5b5"/><rect x="35.5" y="472.24" width="3.8" height="3.8" fill="#fff" stroke="#b3b9c1" stroke-width="0.5"/><rect x="36.3" y="473.84" width="2.2" height="0.6" fill="#4c66a8"/><rect x="37.1" y="473.03999999999996" width="0.6" height="2.2" fill="#4c66a8"/><path d="M41.7 470.84000000000003h3.2l0.7 0.8h4.1v4.6h-8z" fill="#2f86bb"/><rect x="42.0" y="472.24" width="7.4" height="3.7" fill="url(#fg)"/><rect x="39.4" y="482.46999999999997" width="2.4" height="0.5" fill="#b5b5b5"/><rect x="35.5" y="480.82" width="3.8" height="3.8" fill="#fff" stroke="#b3b9c1" stroke-width="0.5"/><rect x="36.3" y="482.41999999999996" width="2.2" height="0.6" fill="#4c66a8"/><rect x="37.1" y="481.61999999999995" width="0.6" height="2.2" fill="#4c66a8"/><path d="M41.7 479.42h3.2l0.7 0.8h4.1v4.6h-8z" fill="#2f86bb"/><rect x="42.0" y="480.82" width="7.4" height="3.7" fill="url(#fg)"/><rect x="39.4" y="491.04999999999995" width="2.4" height="0.5" fill="#b5b5b5"/><rect x="35.5" y="489.4" width="3.8" height="3.8" fill="#fff" stroke="#b3b9c1" stroke-width="0.5"/><rect x="36.3" y="490.99999999999994" width="2.2" height="0.6" fill="#4c66a8"/><rect x="37.1" y="490.19999999999993" width="0.6" height="2.2" fill="#4c66a8"/><path d="M41.7 488.0h3.2l0.7 0.8h4.1v4.6h-8z" fill="#2f86bb"/><rect x="42.0" y="489.4" width="7.4" height="3.7" fill="url(#fg)"/><rect x="39.4" y="499.62999999999994" width="2.4" height="0.5" fill="#b5b5b5"/><rect x="35.5" y="497.97999999999996" width="3.8" height="3.8" fill="#fff" stroke="#b3b9c1" stroke-width="0.5"/><rect x="36.3" y="499.5799999999999" width="2.2" height="0.6" fill="#4c66a8"/><rect x="37.1" y="498.7799999999999" width="0.6" height="2.2" fill="#4c66a8"/><path d="M41.7 496.58h3.2l0.7 0.8h4.1v4.6h-8z" fill="#2f86bb"/><rect x="42.0" y="497.97999999999996" width="7.4" height="3.7" fill="url(#fg)"/><rect x="37.15" y="63.9" width="0.5" height="444.16" fill="#c2c2c2"/><rect x="46.15" y="81.06" width="0.5" height="66.64" fill="#c2c2c2"/><rect x="46.15" y="175.44" width="0.5" height="92.38" fill="#c2c2c2"/><rect x="55.15" y="269.82" width="0.5" height="23.74" fill="#c2c2c2"/><rect x="28.15" y="56" width="0.5" height="4" fill="#b5b5b5"/></svg></div></div><div class="a" style="left:200.4px;top:57.5px;width:7.4px;height:439.8px;background:#f3f7fc"></div><div class="a" style="left:200.4px;top:108px;width:7.4px;height:347px;background:#d5e3f3"></div><svg width="8" height="440" style="left:200px;top:57px" viewBox="0 0 8 440"><path d="M1.9 5.4l1.7-1.8l1.7 1.8" stroke="#222" stroke-width="1" fill="none"/><path d="M1.9 435.6l1.7 1.8l1.7-1.8" stroke="#222" stroke-width="1" fill="none"/></svg><svg width="240" height="70" style="left:250px;top:432px" viewBox="250 432 240 70"><g><rect x="268.4" y="455" width="24.8" height="1" fill="#9299a2"/><rect x="268.4" y="464" width="24.8" height="1" fill="#9299a2"/><polygon points="269.9,454.6 272.7,447.5 274.5,447.9 271.9,455" fill="#22d322"/><rect x="275" y="447.6" width="2.5" height="7.4" fill="#ececec"/><rect x="277.7" y="447.6" width="2.3" height="7.4" fill="#cfd0d2"/><rect x="275.7" y="453" width="1" height="1" fill="#2f5fa8"/><rect x="283.8" y="452.3" width="7.4" height="2.7" fill="#e4e5e7"/><rect x="284.6" y="453" width="2" height="1.1" fill="#9aa0a8"/><rect x="272" y="456.8" width="2.4" height="7.2" fill="#b9bcc0"/><rect x="274.6" y="456.6" width="1.5" height="7.4" fill="#22d322"/><rect x="276.2" y="456.6" width="1.9" height="7.4" fill="#e6e7e9"/><rect x="278.4" y="458.8" width="7.2" height="2.4" fill="#e9eaec"/><rect x="278.4" y="461.3" width="7.2" height="2.4" fill="#a9adb2"/><rect x="288.4" y="456.4" width="2.8" height="7.6" fill="#22d322"/><rect x="270.8" y="465.6" width="2.4" height="7.4" fill="#e9eaec"/><rect x="273.3" y="465.6" width="2" height="7.4" fill="#9ea3a9"/><rect x="277.4" y="465.6" width="2.4" height="7.4" fill="#e2e3e5"/><polygon points="282.3,472.2 285.2,465.5 287.1,465.8 284.4,473.1" fill="#22d322"/><rect x="287.4" y="465.6" width="2.4" height="7.4" fill="#e9eaec"/><rect x="290" y="465.6" width="2.2" height="7.4" fill="#d3d4d6"/><rect x="288" y="471" width="1" height="1" fill="#2f5fa8"/><rect x="270.8" y="473.6" width="21.4" height="3" fill="#3f73b4" opacity="0.45"/></g><g><ellipse cx="340.2" cy="453.7" rx="5.2" ry="3.3" fill="#d6d7d9"/><circle cx="343" cy="452" r="2.4" fill="#e2e3e5"/><path d="M336.6 454.2h7" stroke="#70757c" stroke-width="0.8"/><circle cx="335.2" cy="458" r="0.8" fill="#c9cacc"/><circle cx="336.4" cy="460" r="0.6" fill="#b9babc"/><rect x="346.2" y="449.4" width="12" height="7.8" rx="1.2" fill="#e21e28" stroke="#f08088" stroke-width="0.4"/><polygon points="347.8,457 350,457 349,460.2" fill="#e21e28"/><path d="M347.4 451.9l1 1l1-1l1 1l1-1l1 1l1-1l1 1l1-1l1 1l0.8-0.8M347.4 454.6l1 1l1-1l1 1l1-1l1 1l1-1l1 1l1-1l1 1l0.8-0.8" stroke="#fff" stroke-width="0.7" fill="none"/><circle cx="339.8" cy="461.6" r="3.2" fill="#6b6d70"/><circle cx="339.2" cy="460.8" r="1.6" fill="#8a8c8f"/><path d="M335 472.8v-6.2q0-1.8 1.8-1.8h6.4q1.8 0 1.8 1.8v6.2z" fill="#55585c"/><rect x="335.6" y="465.4" width="2" height="7" fill="#8d9095"/><rect x="337.8" y="464.8" width="4.4" height="8" fill="#f5000f"/><circle cx="355" cy="461.6" r="3.2" fill="#75777a"/><circle cx="354.4" cy="460.8" r="1.6" fill="#94969a"/><path d="M349 474v-7q0-2 2-2h7.2q2 0 2 2v7z" fill="#a6a8ab"/><path d="M353 465.1h4l-2 1.6z" fill="#e0202a"/><rect x="358.2" y="467" width="1.2" height="6" fill="#8d9095"/><rect x="335" y="474.2" width="10" height="3" fill="#5a6f90" opacity="0.35"/><rect x="349" y="475" width="11.2" height="3" fill="#8fa3c4" opacity="0.3"/></g><g><polygon points="404.8,451.6 427.2,464.8 425.2,471.4 412.6,471.4 397.6,462.4" fill="#cdcdcd" stroke="#e9e9e9" stroke-width="0.6" stroke-linejoin="round"/><path d="M404.2 457.6l7.4 4.2M403.2 460.6l7.4 4.2" stroke="#2a2a2a" stroke-width="0.9"/><polygon points="421.8,464 425,465.8 423.8,469 420.6,467.2" fill="#1e90ff"/><rect x="399.2" y="471.2" width="26.8" height="1.8" fill="#272c33"/><rect x="407" y="474.6" width="18" height="1" fill="#3f73b4" opacity="0.5"/></g></svg><div class="a" style="left:250px;top:480.6px;width:61px;text-align:center;font-size:5.1px;line-height:6.4px;color:#fff">Marketingové akcie</div><div class="a" style="left:316px;top:481.8px;width:61px;text-align:center;font-size:5.1px;line-height:6.6px;color:#fff;white-space:normal">Rokovanie s<br>partnermi</div><div class="a" style="left:382px;top:480.6px;width:61px;text-align:center;font-size:5.1px;line-height:6.4px;color:#fff">Podnety</div><div class="a" style="left:211.1px;top:34.1px;width:426.6px;height:361.9px;background:#fff;overflow:hidden"><div style="position:absolute;left:-211.1px;top:-34.1px;width:800px;height:500px"><div class="a" style="left:211.1px;top:34.1px;width:426.6px;height:13.1px;background:#e8e8e8"></div><svg width="10" height="10" style="left:214px;top:36.4px" viewBox="0 0 10 10"><polygon points="1.2,1 7.4,4.4 1.2,8" fill="#fff"/><path d="M2.6 6.2l2.2-1.2" stroke="#777" stroke-width="0.5"/></svg><div class="a" style="left:223.4px;top:38px;font-size:5.45px;line-height:7px;font-weight:bold;color:#3d3d3d">Obchodné prípady</div><div class="a" style="left:591.8px;top:38.1px;font-size:5.6px;line-height:6px;color:#333">34</div><svg width="40" height="10" style="left:600px;top:36px" viewBox="600 36 40 10"><g stroke="#222" fill="none"><path d="M604 41.4h4" stroke-width="0.7"/><rect x="616" y="39" width="4.2" height="4.2" stroke-width="0.7"/><path d="M627.8 39l4.2 4.2M632 39l-4.2 4.2" stroke-width="1.1"/></g></svg><div class="a" style="left:216.2px;top:60.7px;width:349.4px;height:330px;border:0.6px solid #d6e3f5;box-sizing:border-box;background:#fbfcfe"></div><div class="a" style="left:216.2px;top:51.4px;width:25.6px;height:10.2px;border:0.6px solid #d6e3f5;border-bottom:none;box-sizing:border-box;background:#fbfcfe"></div><div class="a" style="left:220.2px;top:54.1px;font-size:5.05px;line-height:6.4px;color:#333">Zoznam</div><div class="a" style="left:244px;top:54.1px;font-size:5.05px;line-height:6.4px;color:#26364f">Detail</div><div class="a" style="left:263.4px;top:54.1px;font-size:5.05px;line-height:6.4px;color:#26364f">Obchodný partner</div><div class="a" style="left:311.2px;top:54.1px;font-size:5.05px;line-height:6.4px;color:#26364f">Druh zákazky</div><div class="a" style="left:222.6px;top:66.4px;width:336.4px;height:305.6px;background:#fff"></div><div class="hd" style="left:222.6px;top:67px;width:41.4px;height:17.6px;padding-top:2px;background:#f9fbfe">Kód obchodného prípadu</div><div class="hd" style="left:264px;top:67px;width:98.5px;height:17.6px;padding-top:2px;background:#f9fbfe">Názov obchodného prípadu</div><div class="hd" style="left:362.5px;top:67px;width:43.5px;height:17.6px;padding-top:2px;background:#f9fbfe">Fáza obchodného prípadu</div><div class="hd" style="left:406px;top:67px;width:54.5px;height:17.6px;padding-top:2px;background:#f9fbfe">Dátum zaevidovania</div><div class="hd" style="left:460.5px;top:67px;width:33.7px;height:17.6px;padding-top:2px;background:#f9fbfe">Druh<br>kontaktu</div><div class="hd" style="left:494.2px;top:67px;width:41.4px;height:17.6px;padding-top:2px;background:#f9fbfe">Kód obchodného partnera</div><div class="hd" style="left:535.6px;top:67px;width:15.9px;height:17.6px;padding-top:2px;background:#f9fbfe">IČO</div><div class="row" style="left:222.6px;top:84.75px;width:328.9px;color:#fff"><div class="c" style="left:0.0px;width:41.4px;background:#0f4d78;font-size:4.75px">OP-CZ-CKOLO</div><div class="c" style="left:41.4px;width:98.5px;background:#0f4d78">OP České kolo - Velko</div><div class="c" style="left:139.9px;width:43.5px;background:#0f4d78">Diagnóza potřeby</div><div class="c" style="left:183.4px;width:54.5px;background:#0f4d78;font-size:5.3px">05.12.2007 14:44:58</div><div class="c" style="left:237.9px;width:33.7px;background:#0f4d78">Aktivní prodej</div><div class="c" style="left:271.6px;width:41.4px;background:#0f4d78">CESKOLSIDLO</div><div class="c" style="left:313.0px;width:15.9px;background:#0f4d78">987563</div></div><div class="row" style="left:222.6px;top:93.33px;width:328.9px;color:#222"><div class="c" style="left:0.0px;width:41.4px;background:#f7f9fc;font-size:4.75px">OP-CZ-VELBIKE</div><div class="c" style="left:41.4px;width:98.5px;background:#b3f07a">OP Velkoobchod Bikezone - Velko</div><div class="c" style="left:139.9px;width:43.5px;background:#b3f07a">Realizace</div><div class="c" style="left:183.4px;width:54.5px;background:#f7f9fc;font-size:5.3px">05.12.2007 14:44:58</div><div class="c" style="left:237.9px;width:33.7px;background:#f7f9fc">Výstava</div><div class="c" style="left:271.6px;width:41.4px;background:#f7f9fc">VELBIKE</div><div class="c" style="left:313.0px;width:15.9px;background:#f7f9fc">646340</div></div><div class="row" style="left:222.6px;top:101.91px;width:328.9px;color:#222"><div class="c" style="left:0.0px;width:41.4px;background:#fff;font-size:4.75px">OP-GE-GESIPA</div><div class="c" style="left:41.4px;width:98.5px;background:#d7fbb6">OP Gesipa Vorstellung - Velko</div><div class="c" style="left:139.9px;width:43.5px;background:#d7fbb6">Realizace</div><div class="c" style="left:183.4px;width:54.5px;background:#fff;font-size:5.3px">05.12.2007 14:44:58</div><div class="c" style="left:237.9px;width:33.7px;background:#fff">Poptávka</div><div class="c" style="left:271.6px;width:41.4px;background:#fff">GESIPA</div><div class="c" style="left:313.0px;width:15.9px;background:#fff">811146</div></div><div class="row" style="left:222.6px;top:110.49px;width:328.9px;color:#222"><div class="c" style="left:0.0px;width:41.4px;background:#f7f9fc;font-size:4.75px">OP-SK-DEWAL</div><div class="c" style="left:41.4px;width:98.5px;background:#b3f07a">OP DEWAL Slovakia - Velko</div><div class="c" style="left:139.9px;width:43.5px;background:#b3f07a">Dohoda</div><div class="c" style="left:183.4px;width:54.5px;background:#f7f9fc;font-size:5.3px">05.12.2007 14:44:58</div><div class="c" style="left:237.9px;width:33.7px;background:#f7f9fc">Doporučení</div><div class="c" style="left:271.6px;width:41.4px;background:#f7f9fc">DEWALSIDLO</div><div class="c" style="left:313.0px;width:15.9px;background:#f7f9fc">086786</div></div><div class="row" style="left:222.6px;top:119.07px;width:328.9px;color:#222"><div class="c" style="left:0.0px;width:41.4px;background:#fff;font-size:4.75px">OP-CZ-VELOM</div><div class="c" style="left:41.4px;width:98.5px;background:#d7fbb6">OP Velom - Malo, Dodavatel</div><div class="c" style="left:139.9px;width:43.5px;background:#d7fbb6">Kontakt</div><div class="c" style="left:183.4px;width:54.5px;background:#fff;font-size:5.3px">05.12.2007 14:44:58</div><div class="c" style="left:237.9px;width:33.7px;background:#fff">Aktivní prodej</div><div class="c" style="left:271.6px;width:41.4px;background:#fff">D-VELOM</div><div class="c" style="left:313.0px;width:15.9px;background:#fff">754548</div></div><div class="row" style="left:222.6px;top:127.65px;width:328.9px;color:#222"><div class="c" style="left:0.0px;width:41.4px;background:#f7f9fc;font-size:4.75px">OP-CZ-TESKOL</div><div class="c" style="left:41.4px;width:98.5px;background:#b3f07a">OP TESKOL - Malo</div><div class="c" style="left:139.9px;width:43.5px;background:#b3f07a">Kontakt</div><div class="c" style="left:183.4px;width:54.5px;background:#f7f9fc;font-size:5.3px">05.12.2007 14:44:58</div><div class="c" style="left:237.9px;width:33.7px;background:#f7f9fc">Výstava</div><div class="c" style="left:271.6px;width:41.4px;background:#f7f9fc">TESKOL</div><div class="c" style="left:313.0px;width:15.9px;background:#f7f9fc">912308</div></div><div class="row" style="left:222.6px;top:136.23px;width:328.9px;color:#222"><div class="c" style="left:0.0px;width:41.4px;background:#fff;font-size:4.75px">OP-CZ-RFW</div><div class="c" style="left:41.4px;width:98.5px;background:#d7fbb6">OP RFW - Malo</div><div class="c" style="left:139.9px;width:43.5px;background:#d7fbb6">Kontakt</div><div class="c" style="left:183.4px;width:54.5px;background:#fff;font-size:5.3px">05.12.2007 14:44:58</div><div class="c" style="left:237.9px;width:33.7px;background:#fff">Aktivní prodej</div><div class="c" style="left:271.6px;width:41.4px;background:#fff">O-RFW</div><div class="c" style="left:313.0px;width:15.9px;background:#fff">243567</div></div><div class="row" style="left:222.6px;top:144.81px;width:328.9px;color:#222"><div class="c" style="left:0.0px;width:41.4px;background:#f7f9fc;font-size:4.75px">OP-CZ-EKOTOOL</div><div class="c" style="left:41.4px;width:98.5px;background:#b3f07a">OP EKOTOOL - Malo</div><div class="c" style="left:139.9px;width:43.5px;background:#b3f07a">Realizováno</div><div class="c" style="left:183.4px;width:54.5px;background:#f7f9fc;font-size:5.3px">12.04.2018 14:05:57</div><div class="c" style="left:237.9px;width:33.7px;background:#f7f9fc">Aktivní prodej</div><div class="c" style="left:271.6px;width:41.4px;background:#f7f9fc">EKOTOOL</div><div class="c" style="left:313.0px;width:15.9px;background:#f7f9fc">076786</div></div><div class="row" style="left:222.6px;top:153.39px;width:328.9px;color:#222"><div class="c" style="left:0.0px;width:41.4px;background:#fff;font-size:4.75px">OP-CZ-CYKLOD</div><div class="c" style="left:41.4px;width:98.5px;background:#d7fbb6">OP Cyklo doplňky - Malo</div><div class="c" style="left:139.9px;width:43.5px;background:#d7fbb6">Realizace</div><div class="c" style="left:183.4px;width:54.5px;background:#fff;font-size:5.3px">05.12.2007 14:44:58</div><div class="c" style="left:237.9px;width:33.7px;background:#fff">www stránky</div><div class="c" style="left:271.6px;width:41.4px;background:#fff">D-CYKLO-C</div><div class="c" style="left:313.0px;width:15.9px;background:#fff">098456</div></div><div class="row" style="left:222.6px;top:161.97px;width:328.9px;color:#222"><div class="c" style="left:0.0px;width:41.4px;background:#f7f9fc;font-size:4.75px">OP-CZ-BARLAK</div><div class="c" style="left:41.4px;width:98.5px;background:#b3f07a">OP Barvy-Laky - Dodavatel</div><div class="c" style="left:139.9px;width:43.5px;background:#b3f07a">Zrušeno</div><div class="c" style="left:183.4px;width:54.5px;background:#f7f9fc;font-size:5.3px">01.01.2010 12:23:49</div><div class="c" style="left:237.9px;width:33.7px;background:#f7f9fc"></div><div class="c" style="left:271.6px;width:41.4px;background:#f7f9fc">BARLAK</div><div class="c" style="left:313.0px;width:15.9px;background:#f7f9fc">008768</div></div><div class="row" style="left:222.6px;top:170.55px;width:328.9px;color:#222"><div class="c" style="left:0.0px;width:41.4px;background:#fff;font-size:4.75px">OP-CZ-PAPYR</div><div class="c" style="left:41.4px;width:98.5px;background:#d7fbb6">OP Papyrus - Dodavatel</div><div class="c" style="left:139.9px;width:43.5px;background:#d7fbb6">Zrušeno</div><div class="c" style="left:183.4px;width:54.5px;background:#fff;font-size:5.3px">01.01.2010 12:26:18</div><div class="c" style="left:237.9px;width:33.7px;background:#fff"></div><div class="c" style="left:271.6px;width:41.4px;background:#fff">PAPYR</div><div class="c" style="left:313.0px;width:15.9px;background:#fff">335509</div></div><div class="row" style="left:222.6px;top:179.13px;width:328.9px;color:#222"><div class="c" style="left:0.0px;width:41.4px;background:#f7f9fc;font-size:4.75px">OP-CZ-PROOBAL</div><div class="c" style="left:41.4px;width:98.5px;background:#b3f07a">OP PRO-OBAL - Dodavatel</div><div class="c" style="left:139.9px;width:43.5px;background:#b3f07a">Zrušeno</div><div class="c" style="left:183.4px;width:54.5px;background:#f7f9fc;font-size:5.3px">01.01.2010 12:27:50</div><div class="c" style="left:237.9px;width:33.7px;background:#f7f9fc"></div><div class="c" style="left:271.6px;width:41.4px;background:#f7f9fc">PROOBAL</div><div class="c" style="left:313.0px;width:15.9px;background:#f7f9fc">451248</div></div><div class="row" style="left:222.6px;top:187.71px;width:328.9px;color:#222"><div class="c" style="left:0.0px;width:41.4px;background:#fff;font-size:4.75px">OP-JP-TOMEN</div><div class="c" style="left:41.4px;width:98.5px;background:#d7fbb6">OP Tomen Industries - Dodavatel</div><div class="c" style="left:139.9px;width:43.5px;background:#d7fbb6">Realizace</div><div class="c" style="left:183.4px;width:54.5px;background:#fff;font-size:5.3px">01.01.2010 12:29:05</div><div class="c" style="left:237.9px;width:33.7px;background:#fff"></div><div class="c" style="left:271.6px;width:41.4px;background:#fff">TOMEN</div><div class="c" style="left:313.0px;width:15.9px;background:#fff"></div></div><div class="row" style="left:222.6px;top:196.29px;width:328.9px;color:#222"><div class="c" style="left:0.0px;width:41.4px;background:#f7f9fc;font-size:4.75px">OP-CZ-TECHN</div><div class="c" style="left:41.4px;width:98.5px;background:#b3f07a">OP TECHNOPLYN - Dodavatel</div><div class="c" style="left:139.9px;width:43.5px;background:#b3f07a">Realizace</div><div class="c" style="left:183.4px;width:54.5px;background:#f7f9fc;font-size:5.3px">01.01.2010 12:30:08</div><div class="c" style="left:237.9px;width:33.7px;background:#f7f9fc"></div><div class="c" style="left:271.6px;width:41.4px;background:#f7f9fc">TECHN</div><div class="c" style="left:313.0px;width:15.9px;background:#f7f9fc">765656</div></div><div class="row" style="left:222.6px;top:204.87px;width:328.9px;color:#222"><div class="c" style="left:0.0px;width:41.4px;background:#fff;font-size:4.75px">OP-CZ-ALKAN</div><div class="c" style="left:41.4px;width:98.5px;background:#d7fbb6">OP Alconn Czech - Dodavatel</div><div class="c" style="left:139.9px;width:43.5px;background:#d7fbb6">Vyjednávání</div><div class="c" style="left:183.4px;width:54.5px;background:#fff;font-size:5.3px">01.01.2010 12:38:31</div><div class="c" style="left:237.9px;width:33.7px;background:#fff"></div><div class="c" style="left:271.6px;width:41.4px;background:#fff">ALKAN</div><div class="c" style="left:313.0px;width:15.9px;background:#fff">765768</div></div><div class="row" style="left:222.6px;top:213.45px;width:328.9px;color:#222"><div class="c" style="left:0.0px;width:41.4px;background:#f7f9fc;font-size:4.75px">OP-CZ-FESKO</div><div class="c" style="left:41.4px;width:98.5px;background:#b3f07a">OP Fesko - Malo</div><div class="c" style="left:139.9px;width:43.5px;background:#b3f07a">Realizace</div><div class="c" style="left:183.4px;width:54.5px;background:#f7f9fc;font-size:5.3px">07.12.2012 11:12:46</div><div class="c" style="left:237.9px;width:33.7px;background:#f7f9fc">Poptávka</div><div class="c" style="left:271.6px;width:41.4px;background:#f7f9fc">O-FESKO</div><div class="c" style="left:313.0px;width:15.9px;background:#f7f9fc">765656</div></div><div class="row" style="left:222.6px;top:222.03px;width:328.9px;color:#222"><div class="c" style="left:0.0px;width:41.4px;background:#fff;font-size:4.75px">QWERTZ</div><div class="c" style="left:41.4px;width:98.5px;background:#d7fbb6">Realizace generálního obchodního případu</div><div class="c" style="left:139.9px;width:43.5px;background:#d7fbb6">Kontakt</div><div class="c" style="left:183.4px;width:54.5px;background:#fff;font-size:5.3px">10.05.2018 15:16:41</div><div class="c" style="left:237.9px;width:33.7px;background:#fff"></div><div class="c" style="left:271.6px;width:41.4px;background:#fff"></div><div class="c" style="left:313.0px;width:15.9px;background:#fff"></div></div><div class="row" style="left:222.6px;top:230.61px;width:328.9px;color:#222"><div class="c" style="left:0.0px;width:41.4px;background:#f7f9fc;font-size:4.75px">OP-CZ-CKOLO-2</div><div class="c" style="left:41.4px;width:98.5px;background:#b3f07a">OP České kolo - Velko - Kopie</div><div class="c" style="left:139.9px;width:43.5px;background:#b3f07a">Diagnóza potřeby</div><div class="c" style="left:183.4px;width:54.5px;background:#f7f9fc;font-size:5.3px">29.05.2018 14:09:58</div><div class="c" style="left:237.9px;width:33.7px;background:#f7f9fc"></div><div class="c" style="left:271.6px;width:41.4px;background:#f7f9fc">CESKOLSIDLO</div><div class="c" style="left:313.0px;width:15.9px;background:#f7f9fc">987563</div></div><div class="row" style="left:222.6px;top:239.19px;width:328.9px;color:#222"><div class="c" style="left:0.0px;width:41.4px;background:#fff;font-size:4.75px">OP-CZ-VELBIKE-2</div><div class="c" style="left:41.4px;width:98.5px;background:#d7fbb6">OP Velkoobchod Bikezone - Kopie</div><div class="c" style="left:139.9px;width:43.5px;background:#d7fbb6">Realizace</div><div class="c" style="left:183.4px;width:54.5px;background:#fff;font-size:5.3px">29.05.2018 14:09:58</div><div class="c" style="left:237.9px;width:33.7px;background:#fff"></div><div class="c" style="left:271.6px;width:41.4px;background:#fff">VELBIKE</div><div class="c" style="left:313.0px;width:15.9px;background:#fff">646340</div></div><div class="row" style="left:222.6px;top:247.77px;width:328.9px;color:#222"><div class="c" style="left:0.0px;width:41.4px;background:#f7f9fc;font-size:4.75px">OP-GE-GESIPA-2</div><div class="c" style="left:41.4px;width:98.5px;background:#b3f07a">OP Gesipa Vorstellung - Kopie</div><div class="c" style="left:139.9px;width:43.5px;background:#b3f07a">Realizace</div><div class="c" style="left:183.4px;width:54.5px;background:#f7f9fc;font-size:5.3px">29.05.2018 14:09:58</div><div class="c" style="left:237.9px;width:33.7px;background:#f7f9fc"></div><div class="c" style="left:271.6px;width:41.4px;background:#f7f9fc">GESIPA</div><div class="c" style="left:313.0px;width:15.9px;background:#f7f9fc">811146</div></div><div class="row" style="left:222.6px;top:256.35px;width:328.9px;color:#222"><div class="c" style="left:0.0px;width:41.4px;background:#fff;font-size:4.75px">OP-SK-DEWAL-2</div><div class="c" style="left:41.4px;width:98.5px;background:#d7fbb6">OP DEWAL Slovakia - Kopie</div><div class="c" style="left:139.9px;width:43.5px;background:#d7fbb6">Dohoda</div><div class="c" style="left:183.4px;width:54.5px;background:#fff;font-size:5.3px">29.05.2018 14:09:58</div><div class="c" style="left:237.9px;width:33.7px;background:#fff"></div><div class="c" style="left:271.6px;width:41.4px;background:#fff">DEWALSIDLO</div><div class="c" style="left:313.0px;width:15.9px;background:#fff">086786</div></div><div class="row" style="left:222.6px;top:264.93px;width:328.9px;color:#222"><div class="c" style="left:0.0px;width:41.4px;background:#f7f9fc;font-size:4.75px">OP-CZ-VELOM-2</div><div class="c" style="left:41.4px;width:98.5px;background:#b3f07a">OP Velom - Kopie</div><div class="c" style="left:139.9px;width:43.5px;background:#b3f07a">Kontakt</div><div class="c" style="left:183.4px;width:54.5px;background:#f7f9fc;font-size:5.3px">29.05.2018 14:09:58</div><div class="c" style="left:237.9px;width:33.7px;background:#f7f9fc"></div><div class="c" style="left:271.6px;width:41.4px;background:#f7f9fc">D-VELOM</div><div class="c" style="left:313.0px;width:15.9px;background:#f7f9fc">754548</div></div><div class="row" style="left:222.6px;top:273.51px;width:328.9px;color:#222"><div class="c" style="left:0.0px;width:41.4px;background:#fff;font-size:4.75px">OP-CZ-TESKOL-2</div><div class="c" style="left:41.4px;width:98.5px;background:#d7fbb6">OP TESKOL - Kopie</div><div class="c" style="left:139.9px;width:43.5px;background:#d7fbb6">Kontakt</div><div class="c" style="left:183.4px;width:54.5px;background:#fff;font-size:5.3px">29.05.2018 14:09:58</div><div class="c" style="left:237.9px;width:33.7px;background:#fff"></div><div class="c" style="left:271.6px;width:41.4px;background:#fff">TESKOL</div><div class="c" style="left:313.0px;width:15.9px;background:#fff">912308</div></div><div class="row" style="left:222.6px;top:282.09px;width:328.9px;color:#222"><div class="c" style="left:0.0px;width:41.4px;background:#f7f9fc;font-size:4.75px">OP-CZ-RFW-2</div><div class="c" style="left:41.4px;width:98.5px;background:#b3f07a">OP RFW - Kopie</div><div class="c" style="left:139.9px;width:43.5px;background:#b3f07a">Kontakt</div><div class="c" style="left:183.4px;width:54.5px;background:#f7f9fc;font-size:5.3px">29.05.2018 14:09:58</div><div class="c" style="left:237.9px;width:33.7px;background:#f7f9fc"></div><div class="c" style="left:271.6px;width:41.4px;background:#f7f9fc">O-RFW</div><div class="c" style="left:313.0px;width:15.9px;background:#f7f9fc">243567</div></div><div class="row" style="left:222.6px;top:290.67px;width:328.9px;color:#222"><div class="c" style="left:0.0px;width:41.4px;background:#fff;font-size:4.75px">OP-CZ-EKOTOOL-2</div><div class="c" style="left:41.4px;width:98.5px;background:#d7fbb6">OP EKOTOOL - Kopie</div><div class="c" style="left:139.9px;width:43.5px;background:#d7fbb6">Realizováno</div><div class="c" style="left:183.4px;width:54.5px;background:#fff;font-size:5.3px">29.05.2018 14:09:58</div><div class="c" style="left:237.9px;width:33.7px;background:#fff"></div><div class="c" style="left:271.6px;width:41.4px;background:#fff">EKOTOOL</div><div class="c" style="left:313.0px;width:15.9px;background:#fff">076786</div></div><div class="row" style="left:222.6px;top:299.25px;width:328.9px;color:#222"><div class="c" style="left:0.0px;width:41.4px;background:#f7f9fc;font-size:4.75px">OP-CZ-CYKLOD-2</div><div class="c" style="left:41.4px;width:98.5px;background:#b3f07a">OP Cyklo doplňky - Kopie</div><div class="c" style="left:139.9px;width:43.5px;background:#b3f07a">Realizace</div><div class="c" style="left:183.4px;width:54.5px;background:#f7f9fc;font-size:5.3px">29.05.2018 14:09:58</div><div class="c" style="left:237.9px;width:33.7px;background:#f7f9fc"></div><div class="c" style="left:271.6px;width:41.4px;background:#f7f9fc">D-CYKLO-C</div><div class="c" style="left:313.0px;width:15.9px;background:#f7f9fc">098456</div></div><div class="row" style="left:222.6px;top:307.83px;width:328.9px;color:#222"><div class="c" style="left:0.0px;width:41.4px;background:#fff;font-size:4.75px">OP-CZ-BARLAK-2</div><div class="c" style="left:41.4px;width:98.5px;background:#d7fbb6">OP Barvy-Laky - Kopie</div><div class="c" style="left:139.9px;width:43.5px;background:#d7fbb6">Zrušeno</div><div class="c" style="left:183.4px;width:54.5px;background:#fff;font-size:5.3px">29.05.2018 14:09:58</div><div class="c" style="left:237.9px;width:33.7px;background:#fff"></div><div class="c" style="left:271.6px;width:41.4px;background:#fff">BARLAK</div><div class="c" style="left:313.0px;width:15.9px;background:#fff">008768</div></div><div class="row" style="left:222.6px;top:316.41px;width:328.9px;color:#222"><div class="c" style="left:0.0px;width:41.4px;background:#f7f9fc;font-size:4.75px">OP-CZ-PAPYR-2</div><div class="c" style="left:41.4px;width:98.5px;background:#b3f07a">OP Papyrus - Kopie</div><div class="c" style="left:139.9px;width:43.5px;background:#b3f07a">Zrušeno</div><div class="c" style="left:183.4px;width:54.5px;background:#f7f9fc;font-size:5.3px">29.05.2018 14:09:58</div><div class="c" style="left:237.9px;width:33.7px;background:#f7f9fc"></div><div class="c" style="left:271.6px;width:41.4px;background:#f7f9fc">PAPYR</div><div class="c" style="left:313.0px;width:15.9px;background:#f7f9fc">335509</div></div><div class="row" style="left:222.6px;top:324.99px;width:328.9px;color:#222"><div class="c" style="left:0.0px;width:41.4px;background:#fff;font-size:4.75px">OP-CZ-PROOBAL-2</div><div class="c" style="left:41.4px;width:98.5px;background:#d7fbb6">OP PRO-OBAL - Kopie</div><div class="c" style="left:139.9px;width:43.5px;background:#d7fbb6">Zrušeno</div><div class="c" style="left:183.4px;width:54.5px;background:#fff;font-size:5.3px">29.05.2018 14:09:58</div><div class="c" style="left:237.9px;width:33.7px;background:#fff"></div><div class="c" style="left:271.6px;width:41.4px;background:#fff">PROOBAL</div><div class="c" style="left:313.0px;width:15.9px;background:#fff">451248</div></div><div class="row" style="left:222.6px;top:333.57px;width:328.9px;color:#222"><div class="c" style="left:0.0px;width:41.4px;background:#f7f9fc;font-size:4.75px">OP-JP-TOMEN-2</div><div class="c" style="left:41.4px;width:98.5px;background:#b3f07a">OP Tomen Industries - Kopie</div><div class="c" style="left:139.9px;width:43.5px;background:#b3f07a">Realizace</div><div class="c" style="left:183.4px;width:54.5px;background:#f7f9fc;font-size:5.3px">29.05.2018 14:09:58</div><div class="c" style="left:237.9px;width:33.7px;background:#f7f9fc"></div><div class="c" style="left:271.6px;width:41.4px;background:#f7f9fc">TOMEN</div><div class="c" style="left:313.0px;width:15.9px;background:#f7f9fc"></div></div><div class="row" style="left:222.6px;top:342.15px;width:328.9px;color:#222"><div class="c" style="left:0.0px;width:41.4px;background:#fff;font-size:4.75px">OP-CZ-TECHN-2</div><div class="c" style="left:41.4px;width:98.5px;background:#d7fbb6">OP TECHNOPLYN - Kopie</div><div class="c" style="left:139.9px;width:43.5px;background:#d7fbb6">Realizace</div><div class="c" style="left:183.4px;width:54.5px;background:#fff;font-size:5.3px">29.05.2018 14:09:58</div><div class="c" style="left:237.9px;width:33.7px;background:#fff"></div><div class="c" style="left:271.6px;width:41.4px;background:#fff">TECHN</div><div class="c" style="left:313.0px;width:15.9px;background:#fff">765656</div></div><div class="row" style="left:222.6px;top:350.73px;width:328.9px;color:#222"><div class="c" style="left:0.0px;width:41.4px;background:#f7f9fc;font-size:4.75px">OP-CZ-ALKAN-2</div><div class="c" style="left:41.4px;width:98.5px;background:#b3f07a">OP Alconn Czech - Kopie</div><div class="c" style="left:139.9px;width:43.5px;background:#b3f07a">Vyjednávání</div><div class="c" style="left:183.4px;width:54.5px;background:#f7f9fc;font-size:5.3px">29.05.2018 14:09:58</div><div class="c" style="left:237.9px;width:33.7px;background:#f7f9fc"></div><div class="c" style="left:271.6px;width:41.4px;background:#f7f9fc">ALKAN</div><div class="c" style="left:313.0px;width:15.9px;background:#f7f9fc">765768</div></div><div class="a" style="left:551.5px;top:66.4px;width:7.5px;height:297px;background:#f3f7fc"></div><div class="a" style="left:551.5px;top:76.6px;width:7.5px;height:136px;background:#d5e3f3"></div><svg width="8" height="10" style="left:551.5px;top:68px" viewBox="0 0 8 10"><path d="M2 5.2l1.8-1.9l1.8 1.9" stroke="#222" stroke-width="1" fill="none"/></svg><div class="a" style="left:222.6px;top:363px;width:336.4px;height:8.4px;background:#f3f7fc"></div><div class="a" style="left:231.6px;top:363.4px;width:8px;height:7.6px;background:#d5e3f3"></div><svg width="8" height="9" style="left:224px;top:363px" viewBox="0 0 8 9"><path d="M4.6 2.4l-1.9 1.8l1.9 1.8" stroke="#222" stroke-width="1" fill="none"/></svg><div class="a" style="left:223.1px;top:376.1px;width:6.3px;height:6.3px;border:0.6px solid #b0b9c0;border-radius:0.8px;box-sizing:border-box;background:#fff"></div><div class="a" style="left:231px;top:376px;font-size:5.05px;line-height:6.4px;color:#333">Nesledovať zmeny</div><div class="btn" style="left:572.1px;top:58.90px">Poznámky</div><div class="btn" style="left:572.1px;top:72.28px">Prílohy</div><div class="btn" style="left:572.1px;top:85.66px">Elektronické správy</div><div class="btn" style="left:572.1px;top:99.04px">Súhrn informácií</div><div class="btn" style="left:572.1px;top:112.42px">Obchodný partner</div><div class="btn" style="left:572.1px;top:125.80px">Konkurencia</div><div class="btn" style="left:572.1px;top:139.18px">Hodnotenie<i></i></div><div class="btn" style="left:572.1px;top:152.56px">Členenie akcie</div><div class="btn" style="left:572.1px;top:165.94px">Podriadené akcie<i></i></div><div class="btn" style="left:572.1px;top:179.32px">Nadriadená akcia<i></i></div><div class="btn" style="left:572.1px;top:192.70px">Súvisiace akcie</div><div class="btn" style="left:572.1px;top:206.08px">Rozpočet akcie</div><div class="btn" style="left:572.1px;top:219.46px">Doklady<i></i></div><div class="btn" style="left:572.1px;top:232.84px">Oprávnenia</div></div></div><div class="a" style="left:248.4px;top:234.4px;width:461px;height:196.9px;background:#fff"></div><div class="a" style="left:248.4px;top:234.4px;width:461px;height:13.3px;background:#1b4568"></div><svg width="8" height="10" style="left:251px;top:236.4px" viewBox="0 0 8 10"><polygon points="0.8,0.6 6.4,4.7 0.8,9" fill="#fff"/></svg><div class="a" style="left:260.6px;top:237.7px;font-size:5.7px;line-height:7px;font-weight:bold;color:#fff">Realizačný tím akcie</div><div class="a" style="left:666px;top:239.4px;font-size:4.8px;line-height:6px;font-weight:bold;color:#fff">3</div><svg width="40" height="10" style="left:670px;top:236px" viewBox="670 236 40 10"><g stroke="#fff" fill="none" stroke-width="0.8"><path d="M675 241.6h4"/><rect x="686.8" y="239.2" width="4.2" height="4.2"/><path d="M699 239.2l4.2 4.2M703.2 239.2l-4.2 4.2"/></g></svg><div class="a" style="left:254px;top:250px;width:382.6px;height:104.4px;border:0.6px solid #dbe6f5;box-sizing:border-box;background:#f8fafd"></div><div class="a" style="left:254px;top:359.2px;width:382.6px;height:66.8px;border:0.6px solid #dbe6f5;box-sizing:border-box;background:#f8fafd"></div><div class="a" style="left:258.3px;top:256.3px;width:373.90000000000003px;height:80.6px;background:#f6f9fd"></div><div class="hd" style="left:258.3px;top:256.3px;width:51.3px;height:16.6px;padding-top:1.5px;background:#f9fbfe">Celé meno</div><div class="hd" style="left:309.6px;top:256.3px;width:25.0px;height:16.6px;padding-top:1.5px;background:#f9fbfe">Titul pred menom</div><div class="hd" style="left:334.6px;top:256.3px;width:28.0px;height:16.6px;padding-top:1.5px;background:#f9fbfe">Meno</div><div class="hd" style="left:362.6px;top:256.3px;width:41.9px;height:16.6px;padding-top:1.5px;background:#f9fbfe">Priezvisko</div><div class="hd" style="left:404.5px;top:256.3px;width:19.7px;height:16.6px;padding-top:1.5px;background:#f9fbfe">Kód roli v tíme</div><div class="hd" style="left:424.2px;top:256.3px;width:44.8px;height:16.6px;padding-top:1.5px;background:#f9fbfe">Názov roli v tíme</div><div class="hd" style="left:469px;top:256.3px;width:21.5px;height:16.6px;padding-top:1.5px;background:#f9fbfe">Pohlavie</div><div class="hd" style="left:490.5px;top:256.3px;width:33.0px;height:16.6px;padding-top:1.5px;background:#f9fbfe">Obchodný partner</div><div class="hd" style="left:523.5px;top:256.3px;width:40.5px;height:16.6px;padding-top:1.5px;background:#f9fbfe">Telefón</div><div class="hd" style="left:564px;top:256.3px;width:60.3px;height:16.6px;padding-top:1.5px;background:#f9fbfe">Email</div><div class="row" style="left:258.3px;top:273.30px;width:365.99999999999994px;height:8.66px;color:#fff"><div class="c" style="left:0.0px;width:51.3px;background:#0f4d78">Bedřich Igor</div><div class="c" style="left:51.3px;width:25.0px;background:#0f4d78">Ing.</div><div class="c" style="left:76.3px;width:28.0px;background:#0f4d78">Igor</div><div class="c" style="left:104.3px;width:41.9px;background:#0f4d78">Bedřich</div><div class="c" style="left:146.2px;width:19.7px;background:#0f4d78">OBM</div><div class="c" style="left:165.9px;width:44.8px;background:#0f4d78;box-shadow:inset 0 0 0 0.7px #e0454a">Obchodní manažer</div><div class="c" style="left:210.7px;width:21.5px;background:#0f4d78">Muž</div><div class="c" style="left:232.2px;width:33.0px;background:#0f4d78">Bikenet s.r.o.</div><div class="c" style="left:265.2px;width:40.5px;background:#0f4d78;font-size:5.2px">+420721123456</div><div class="c" style="left:305.7px;width:60.3px;background:#0f4d78">igor.bedrich@tiscali.cz</div></div><div class="row" style="left:258.3px;top:281.96px;width:365.99999999999994px;height:8.66px;color:#222"><div class="c" style="left:0.0px;width:51.3px;background:#c9d9fb">Kaláb Michal</div><div class="c" style="left:51.3px;width:25.0px;background:#c9d9fb"></div><div class="c" style="left:76.3px;width:28.0px;background:#fff">Michal</div><div class="c" style="left:104.3px;width:41.9px;background:#b3f07a">Kaláb</div><div class="c" style="left:146.2px;width:19.7px;background:#fff">TEC</div><div class="c" style="left:165.9px;width:44.8px;background:#fff">Technolog</div><div class="c" style="left:210.7px;width:21.5px;background:#c9d9fb">Muž</div><div class="c" style="left:232.2px;width:33.0px;background:#fff">Bikenet s.r.o.</div><div class="c" style="left:265.2px;width:40.5px;background:#fff;font-size:5.2px"></div><div class="c" style="left:305.7px;width:60.3px;background:#fff">kalab@qi.cz</div></div><div class="row" style="left:258.3px;top:290.62px;width:365.99999999999994px;height:8.66px;color:#222"><div class="c" style="left:0.0px;width:51.3px;background:#e1eafc">Růžičková Petra</div><div class="c" style="left:51.3px;width:25.0px;background:#e1eafc">Ing.</div><div class="c" style="left:76.3px;width:28.0px;background:#fff">Petra</div><div class="c" style="left:104.3px;width:41.9px;background:#d7fbb6">Růžičková</div><div class="c" style="left:146.2px;width:19.7px;background:#fff">FIN</div><div class="c" style="left:165.9px;width:44.8px;background:#fff">Finanční účetní</div><div class="c" style="left:210.7px;width:21.5px;background:#e1eafc">Žena</div><div class="c" style="left:232.2px;width:33.0px;background:#fff">Bikenet s.r.o.</div><div class="c" style="left:265.2px;width:40.5px;background:#fff;font-size:5.2px">+420723364642</div><div class="c" style="left:305.7px;width:60.3px;background:#fff">petra.ruzickova@email.cz</div></div><div class="a" style="left:624.3px;top:256.3px;width:7.9px;height:72.4px;background:#f3f7fc"></div><div class="a" style="left:624.3px;top:264.8px;width:7.9px;height:33.6px;background:#d5e3f3"></div><svg width="8" height="74" style="left:624.3px;top:256px" viewBox="0 0 8 74"><path d="M2.1 5l1.8-1.9l1.8 1.9" stroke="#222" stroke-width="1" fill="none"/><path d="M2.1 68l1.8 1.9l1.8-1.9" stroke="#222" stroke-width="1" fill="none"/></svg><div class="a" style="left:258.3px;top:328.7px;width:365.99999999999994px;height:8.2px;background:#f3f7fc"></div><div class="a" style="left:266.8px;top:329.1px;width:8px;height:7.4px;background:#d5e3f3"></div><svg width="370" height="9" style="left:258.6px;top:328.7px" viewBox="258.6 328.7 370 9"><path d="M263.2 331l-1.9 1.8l1.9 1.8" stroke="#222" stroke-width="1" fill="none"/><path d="M619.4 331l1.9 1.8l-1.9 1.8" stroke="#222" stroke-width="1" fill="none"/></svg><div class="a" style="left:258.1px;top:343.7px;width:6.3px;height:6.3px;border:0.6px solid #b0b9c0;border-radius:0.8px;box-sizing:border-box;background:#fff"></div><div class="a" style="left:266px;top:343.8px;font-size:5.05px;line-height:6.4px;color:#333">Povoliť viacnásobnú účasť</div><div class="a" style="left:257.6px;top:362.6px;font-size:5.05px;line-height:6.4px;color:#333">Poznámka</div><div class="a" style="left:258.3px;top:371.2px;width:373.90000000000003px;height:50.6px;background:#fff;border:0.5px solid #dbe6f5;box-sizing:border-box"></div><div class="a" style="left:258.3px;top:371.2px;width:373.90000000000003px;height:12.2px;background:linear-gradient(#fbfcfe,#fbfcfe 55%,#e6eef8)"></div><div class="a" style="left:258.3px;top:371.2px;width:10.8px;height:12.2px;background:#e6eef8"></div><div class="a" style="left:269px;top:371.2px;width:0.6px;height:50.4px;background:#c9daf0"></div><svg width="380" height="16" style="left:256px;top:370px" viewBox="256 370 380 16"><path d="M262 375v3.2h3.4" stroke="#2d57b8" stroke-width="1" fill="none"/><polygon points="270.2,371.6 275.6,371.6 272.9,375.8" fill="#a2a2a2"/><polygon points="272.9,375.6 275.6,378.4 275.6,382.6 270.2,382.6 270.2,378.4" fill="#a2a2a2"/><path d="M270.2 379.8h5.4M270.2 381.2h5.4" stroke="#d6d6d6" stroke-width="0.4"/><polygon points="624,371.4 629,371.4 626.5,375" fill="#9aa0a8"/><rect x="276.5" y="375.6" width="0.6" height="1.4" fill="#444"/><rect x="281.0" y="375.2" width="0.6" height="2.2" fill="#444"/><rect x="285.5" y="375.6" width="0.6" height="1.4" fill="#444"/><rect x="294.5" y="375.6" width="0.6" height="1.4" fill="#444"/><rect x="299.0" y="375.2" width="0.6" height="2.2" fill="#444"/><rect x="303.5" y="375.6" width="0.6" height="1.4" fill="#444"/><text x="290.3" y="378.5" font-size="5.6" fill="#222" text-anchor="middle" font-family="Liberation Sans,sans-serif">1</text><rect x="312.5" y="375.6" width="0.6" height="1.4" fill="#444"/><rect x="317.0" y="375.2" width="0.6" height="2.2" fill="#444"/><rect x="321.5" y="375.6" width="0.6" height="1.4" fill="#444"/><text x="308.3" y="378.5" font-size="5.6" fill="#222" text-anchor="middle" font-family="Liberation Sans,sans-serif">2</text><rect x="330.5" y="375.6" width="0.6" height="1.4" fill="#444"/><rect x="335.0" y="375.2" width="0.6" height="2.2" fill="#444"/><rect x="339.5" y="375.6" width="0.6" height="1.4" fill="#444"/><text x="326.3" y="378.5" font-size="5.6" fill="#222" text-anchor="middle" font-family="Liberation Sans,sans-serif">3</text><rect x="348.5" y="375.6" width="0.6" height="1.4" fill="#444"/><rect x="353.0" y="375.2" width="0.6" height="2.2" fill="#444"/><rect x="357.5" y="375.6" width="0.6" height="1.4" fill="#444"/><text x="344.3" y="378.5" font-size="5.6" fill="#222" text-anchor="middle" font-family="Liberation Sans,sans-serif">4</text><rect x="366.5" y="375.6" width="0.6" height="1.4" fill="#444"/><rect x="371.0" y="375.2" width="0.6" height="2.2" fill="#444"/><rect x="375.5" y="375.6" width="0.6" height="1.4" fill="#444"/><text x="362.3" y="378.5" font-size="5.6" fill="#222" text-anchor="middle" font-family="Liberation Sans,sans-serif">5</text><rect x="384.5" y="375.6" width="0.6" height="1.4" fill="#444"/><rect x="389.0" y="375.2" width="0.6" height="2.2" fill="#444"/><rect x="393.5" y="375.6" width="0.6" height="1.4" fill="#444"/><text x="380.3" y="378.5" font-size="5.6" fill="#222" text-anchor="middle" font-family="Liberation Sans,sans-serif">6</text><rect x="402.5" y="375.6" width="0.6" height="1.4" fill="#444"/><rect x="407.0" y="375.2" width="0.6" height="2.2" fill="#444"/><rect x="411.5" y="375.6" width="0.6" height="1.4" fill="#444"/><text x="398.3" y="378.5" font-size="5.6" fill="#222" text-anchor="middle" font-family="Liberation Sans,sans-serif">7</text><rect x="420.5" y="375.6" width="0.6" height="1.4" fill="#444"/><rect x="425.0" y="375.2" width="0.6" height="2.2" fill="#444"/><rect x="429.5" y="375.6" width="0.6" height="1.4" fill="#444"/><text x="416.3" y="378.5" font-size="5.6" fill="#222" text-anchor="middle" font-family="Liberation Sans,sans-serif">8</text><rect x="438.5" y="375.6" width="0.6" height="1.4" fill="#444"/><rect x="443.0" y="375.2" width="0.6" height="2.2" fill="#444"/><rect x="447.5" y="375.6" width="0.6" height="1.4" fill="#444"/><text x="434.3" y="378.5" font-size="5.6" fill="#222" text-anchor="middle" font-family="Liberation Sans,sans-serif">9</text><rect x="456.5" y="375.6" width="0.6" height="1.4" fill="#444"/><rect x="461.0" y="375.2" width="0.6" height="2.2" fill="#444"/><rect x="465.5" y="375.6" width="0.6" height="1.4" fill="#444"/><text x="452.3" y="378.5" font-size="5.6" fill="#222" text-anchor="middle" font-family="Liberation Sans,sans-serif">10</text><rect x="474.5" y="375.6" width="0.6" height="1.4" fill="#444"/><rect x="479.0" y="375.2" width="0.6" height="2.2" fill="#444"/><rect x="483.5" y="375.6" width="0.6" height="1.4" fill="#444"/><text x="470.3" y="378.5" font-size="5.6" fill="#222" text-anchor="middle" font-family="Liberation Sans,sans-serif">11</text><rect x="492.5" y="375.6" width="0.6" height="1.4" fill="#444"/><rect x="497.0" y="375.2" width="0.6" height="2.2" fill="#444"/><rect x="501.5" y="375.6" width="0.6" height="1.4" fill="#444"/><text x="488.3" y="378.5" font-size="5.6" fill="#222" text-anchor="middle" font-family="Liberation Sans,sans-serif">12</text><rect x="510.5" y="375.6" width="0.6" height="1.4" fill="#444"/><rect x="515.0" y="375.2" width="0.6" height="2.2" fill="#444"/><rect x="519.5" y="375.6" width="0.6" height="1.4" fill="#444"/><text x="506.3" y="378.5" font-size="5.6" fill="#222" text-anchor="middle" font-family="Liberation Sans,sans-serif">13</text><rect x="528.5" y="375.6" width="0.6" height="1.4" fill="#444"/><rect x="533.0" y="375.2" width="0.6" height="2.2" fill="#444"/><rect x="537.5" y="375.6" width="0.6" height="1.4" fill="#444"/><text x="524.3" y="378.5" font-size="5.6" fill="#222" text-anchor="middle" font-family="Liberation Sans,sans-serif">14</text><rect x="546.5" y="375.6" width="0.6" height="1.4" fill="#444"/><rect x="551.0" y="375.2" width="0.6" height="2.2" fill="#444"/><rect x="555.5" y="375.6" width="0.6" height="1.4" fill="#444"/><text x="542.3" y="378.5" font-size="5.6" fill="#222" text-anchor="middle" font-family="Liberation Sans,sans-serif">15</text><rect x="564.5" y="375.6" width="0.6" height="1.4" fill="#444"/><rect x="569.0" y="375.2" width="0.6" height="2.2" fill="#444"/><rect x="573.5" y="375.6" width="0.6" height="1.4" fill="#444"/><text x="560.3" y="378.5" font-size="5.6" fill="#222" text-anchor="middle" font-family="Liberation Sans,sans-serif">16</text><rect x="582.5" y="375.6" width="0.6" height="1.4" fill="#444"/><rect x="587.0" y="375.2" width="0.6" height="2.2" fill="#444"/><rect x="591.5" y="375.6" width="0.6" height="1.4" fill="#444"/><text x="578.3" y="378.5" font-size="5.6" fill="#222" text-anchor="middle" font-family="Liberation Sans,sans-serif">17</text><rect x="600.5" y="375.6" width="0.6" height="1.4" fill="#444"/><rect x="605.0" y="375.2" width="0.6" height="2.2" fill="#444"/><rect x="609.5" y="375.6" width="0.6" height="1.4" fill="#444"/><text x="596.3" y="378.5" font-size="5.6" fill="#222" text-anchor="middle" font-family="Liberation Sans,sans-serif">18</text><rect x="618.5" y="375.6" width="0.6" height="1.4" fill="#444"/><rect x="623.0" y="375.2" width="0.6" height="2.2" fill="#444"/><text x="614.3" y="378.5" font-size="5.6" fill="#222" text-anchor="middle" font-family="Liberation Sans,sans-serif">19</text><polygon points="264.4,384.6 266.8,386.7 264.4,388.8" fill="#111"/></svg><div class="btn" style="left:643px;top:251.70px;width:60.8px">Úloha člena tímu</div><div class="btn" style="left:643px;top:265.02px;width:60.8px">Obchodný partner</div><div class="btn" style="left:643px;top:278.34px;width:60.8px">Karta osoby</div><div class="btn" style="left:643px;top:291.66px;width:60.8px">Vytvoriť e-mail</div><div class="btn" style="left:643px;top:304.98px;width:60.8px">Organizačný kalendár</div><div class="btn" style="left:643px;top:318.30px;width:60.8px">Vyťaženie kapacít</div><div class="btn" style="left:643px;top:331.62px;width:60.8px">Členstvo v tímoch</div><div class="btn" style="left:643px;top:344.94px;width:60.8px">Výkazy činností<i></i></div><div class="btn" style="left:643px;top:415.4px;width:60.8px">Multivýber<i></i></div><div class="a" style="left:0;top:498.6px;width:800px;height:1.4px;background:#2a2c30"></div></body></html>
